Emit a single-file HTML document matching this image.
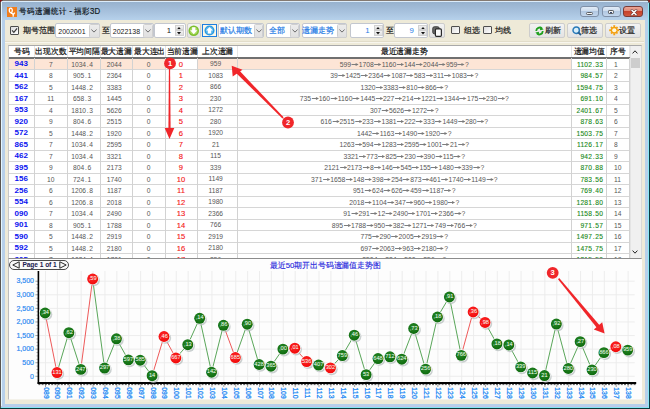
<!DOCTYPE html><html><head><meta charset="utf-8"><style>
*{margin:0;padding:0;box-sizing:border-box}
html,body{width:650px;height:409px;overflow:hidden;background:#5a5550}
body{position:relative;font-family:"Liberation Sans",sans-serif;}
.ab{position:absolute}
.t{position:absolute;white-space:nowrap;line-height:1}
.combo{position:absolute;background:#fff;border:1px solid #c3c7cf;border-radius:2px}
.dd{position:absolute;top:1px;bottom:1px;right:1px;background:linear-gradient(#f2f2f2,#dcdcdc);border:1px solid #d3d3d3;border-radius:1px}
.btn{position:absolute;background:linear-gradient(#f3f3f3,#e3e3e3);border:1px solid #cdcdcd;border-radius:2px}
.chk{position:absolute;background:linear-gradient(135deg,#dcdcdc,#fff);border:1px solid #4e4e4e;border-radius:1px}
.cell{position:absolute;white-space:nowrap;line-height:1;text-align:center}
.ar{display:inline-block;vertical-align:0px}
</style></head><body>

<div class="ab" style="left:1px;top:1px;width:648px;height:408px;background:#b7d0ea;border-radius:4px 4px 0 0;"></div>
<div class="ab" style="left:3px;top:0;width:644px;height:1.2px;background:#847a72"></div>
<div class="ab" style="left:2px;top:2.2px;width:646px;height:17.5px;background:linear-gradient(#97b2ce,#a6c0dc 50%,#b6d1eb)"></div>
<div class="ab" style="left:1px;top:1.2px;width:647px;height:1px;background:#dcecfa"></div>
<div class="ab" style="left:1px;top:1.2px;width:1px;height:406px;background:#e4f6ff"></div>
<div class="ab" style="left:1px;top:405.7px;width:648px;height:1.3px;background:#c4c6e8"></div>
<div class="ab" style="left:1px;top:407px;width:648px;height:1px;background:#86e6f4"></div>
<div class="ab" style="left:0px;top:408px;width:650px;height:1px;background:#0b3a3a"></div>
<div class="ab" style="left:647.6px;top:3px;width:0.8px;height:405px;background:#c6c8ea"></div>
<div class="ab" style="left:648.3px;top:3px;width:0.8px;height:405px;background:#8ae8f6"></div>
<div class="ab" style="left:649px;top:3px;width:1px;height:406px;background:#0d3c44"></div>
<div class="ab" style="left:0;top:0;width:2.4px;height:2.4px;background:#8a1414;border-radius:0 0 2.4px 0"></div>
<div class="ab" style="left:647.6px;top:0;width:2.4px;height:2.4px;background:#8a1414;border-radius:0 0 0 2.4px"></div>
<div class="ab" style="left:7px;top:7px;width:9.5px;height:10px;background:#f07d1c"></div>
<svg class="ab" style="left:7px;top:7px" width="10" height="10" viewBox="0 0 10 10"><ellipse cx="3.8" cy="3.4" rx="1.5" ry="2.2" stroke="#fff" stroke-width="1.3" fill="none"/><path d="M3.6 5.2 L4.6 6.6 M4.6 5.6 L6.2 7.6 L7.8 5.6 M6.2 7.6 V9.8" stroke="#fff" stroke-width="1.3" fill="none"/></svg>
<div class="t" style="left:19.2px;top:7.6px;font-size:7.8px;color:#141c26;-webkit-text-stroke:0.2px #141c26;transform:scaleY(1.08);transform-origin:0 50%">号码遗漏统计 - 福彩3D</div>
<div class="ab" style="left:580.2px;top:6.4px;width:19.3px;height:11px;background:linear-gradient(#e2ecf7 0%,#cddcee 45%,#b2c8e2 50%,#c3d6ec 100%);border:1px solid #7f90a8;border-radius:3px"></div>
<div class="ab" style="left:601.7px;top:6.4px;width:19.5px;height:11px;background:linear-gradient(#e2ecf7 0%,#cddcee 45%,#b2c8e2 50%,#c3d6ec 100%);border:1px solid #7f90a8;border-radius:3px"></div>
<div class="ab" style="left:623.4px;top:6.4px;width:20px;height:11px;background:linear-gradient(#eba595 0%,#e08a78 45%,#c7432c 50%,#d0583e 100%);border:1px solid #7a3a36;border-radius:3px"></div>
<div class="ab" style="left:586.2px;top:11.8px;width:7px;height:2.8px;background:#f6f6f6;border:0.9px solid #5a5d62;border-radius:1.4px"></div>
<div class="ab" style="left:607.6px;top:9.6px;width:6.8px;height:4.8px;background:#f2f2f2;border:1px solid #5a5d62;border-radius:1.2px"><div style="position:absolute;left:1.4px;top:1.2px;width:2px;height:0.9px;background:#3a4a70"></div></div>
<svg class="ab" style="left:629px;top:7.5px" width="10" height="9" viewBox="0 0 10 9"><path d="M2.9 2.3 L7.1 6.7 M7.1 2.3 L2.9 6.7" stroke="#6a3a3a" stroke-width="2.6" stroke-linecap="round"/><path d="M2.9 2.3 L7.1 6.7 M7.1 2.3 L2.9 6.7" stroke="#fff" stroke-width="1.4" stroke-linecap="round"/></svg>
<div class="ab" style="left:4.8px;top:19.5px;width:639.8px;height:384.2px;background:#eeead8"></div>
<div class="ab" style="left:5px;top:42.2px;width:639px;height:1px;background:#f8f6ee"></div>
<div class="ab" style="left:5px;top:41.4px;width:639px;height:0.8px;background:#e2ddca"></div>
<div class="chk" style="left:10px;top:26.3px;width:9px;height:8.6px"></div>
<svg class="ab" style="left:10px;top:26.3px" width="9" height="8.6" viewBox="0 0 9 9"><path d="M2 4.6 L3.8 6.6 L7.2 2.4" stroke="#3a3a3a" stroke-width="1.3" fill="none"/></svg>
<div class="t" style="left:23px;top:27.15px;font-size:7.7px;color:#1a1a1a;-webkit-text-stroke:0.2px #1a1a1a;">期号范围</div>
<div class="combo" style="left:55.4px;top:23.4px;width:45.1px;height:14.899999999999999px"></div>
<div class="ab" style="left:88.5px;top:24.0px;width:11.4px;height:13.7px;background:linear-gradient(#ececec,#e0e0e0);border:1px solid #cfcfcf;border-radius:1.5px"></div>
<svg class="ab" style="left:91.2px;top:29.4px" width="6" height="4" viewBox="0 0 6 4"><path d="M0.4 0.6 L3 3.1 L5.6 0.6" stroke="#4a4a4a" stroke-width="0.8" fill="none"/></svg>
<div class="t" style="left:58.3px;top:27.15px;font-size:7.7px;color:#1a1a1a;"></div>
<div class="t" style="left:58.3px;top:27.5px;font-size:7px;color:#1a1a1a;">2002001</div>
<div class="t" style="left:102px;top:27.15px;font-size:7.7px;color:#1a1a1a;-webkit-text-stroke:0.2px #1a1a1a;">至</div>
<div class="combo" style="left:110px;top:23.4px;width:44px;height:14.899999999999999px"></div>
<div class="ab" style="left:142.5px;top:24.0px;width:10.9px;height:13.7px;background:linear-gradient(#ececec,#e0e0e0);border:1px solid #cfcfcf;border-radius:1.5px"></div>
<svg class="ab" style="left:144.95px;top:29.4px" width="6" height="4" viewBox="0 0 6 4"><path d="M0.4 0.6 L3 3.1 L5.6 0.6" stroke="#4a4a4a" stroke-width="0.8" fill="none"/></svg>
<div class="t" style="left:113px;top:27.15px;font-size:7.7px;color:#1a1a1a;"></div>
<div class="t" style="left:112.8px;top:27.5px;font-size:7px;color:#1a1a1a;">2022138</div>
<div class="combo" style="left:153.8px;top:23.4px;width:32.0px;height:14.899999999999999px"></div>
<div class="t" style="left:166.8px;top:27.3px;font-size:7.8px;color:#1a1a1a;">1</div>
<div class="ab" style="left:174.6px;top:25px;width:9.6px;height:5.2px;background:linear-gradient(#f0f0f0,#e0e0e0);border:1px solid #d2d2d2"></div>
<div class="ab" style="left:174.6px;top:30.4px;width:9.6px;height:5.8px;background:linear-gradient(#f0f0f0,#e0e0e0);border:1px solid #d2d2d2"></div>
<svg class="ab" style="left:177.4px;top:26.6px" width="4" height="2.4" viewBox="0 0 4 2.4"><path d="M0 2.4 L2 0 L4 2.4z" fill="#111"/></svg>
<svg class="ab" style="left:177.4px;top:32.4px" width="4" height="2.4" viewBox="0 0 4 2.4"><path d="M0 0 L2 2.4 L4 0z" fill="#111"/></svg>
<div class="btn" style="left:186.5px;top:23px;width:14.3px;height:14.7px"></div>
<svg class="ab" style="left:188px;top:25px" width="11.5" height="11.5" viewBox="0 0 12 12"><circle cx="6" cy="6" r="5.5" fill="#7cbf2c"/><circle cx="6" cy="6" r="4" fill="#a8d85e"/><path d="M4.3 2.4 h3.4 v3.2 h2.1 L6 9.6 L2.2 5.6 h2.1 z" fill="#fff"/></svg>
<div class="ab" style="left:202px;top:23.8px;width:15px;height:13.5px;border:1.5px solid #1e7fe0;background:#fcf8e8"></div>
<svg class="ab" style="left:203.8px;top:25.3px" width="11" height="11" viewBox="0 0 12 12"><circle cx="6" cy="6" r="5.5" fill="#2b9ae0"/><circle cx="6" cy="6" r="4" fill="#5ab8ee"/><path d="M6 2.2 L9.8 6 h-2 v3.4 h-3.6 v-3.4 h-2 z" fill="#fff"/></svg>
<div class="combo" style="left:217.7px;top:23.4px;width:46.10000000000002px;height:14.899999999999999px"></div>
<div class="ab" style="left:253.8px;top:24.0px;width:9.4px;height:13.7px;background:linear-gradient(#ececec,#e0e0e0);border:1px solid #cfcfcf;border-radius:1.5px"></div>
<svg class="ab" style="left:255.5px;top:29.4px" width="6" height="4" viewBox="0 0 6 4"><path d="M0.4 0.6 L3 3.1 L5.6 0.6" stroke="#4a4a4a" stroke-width="0.8" fill="none"/></svg>
<div class="t" style="left:220.2px;top:27.15px;font-size:7.7px;color:#2a7ee6;-webkit-text-stroke:0.2px #2a7ee6;">默认期数</div>
<div class="combo" style="left:266px;top:23.4px;width:34px;height:14.899999999999999px"></div>
<div class="ab" style="left:290px;top:24.0px;width:9.4px;height:13.7px;background:linear-gradient(#ececec,#e0e0e0);border:1px solid #cfcfcf;border-radius:1.5px"></div>
<svg class="ab" style="left:291.7px;top:29.4px" width="6" height="4" viewBox="0 0 6 4"><path d="M0.4 0.6 L3 3.1 L5.6 0.6" stroke="#4a4a4a" stroke-width="0.8" fill="none"/></svg>
<div class="t" style="left:269px;top:27.15px;font-size:7.7px;color:#2a7ee6;-webkit-text-stroke:0.2px #2a7ee6;">全部</div>
<div class="combo" style="left:301.5px;top:23.4px;width:45.80000000000001px;height:14.899999999999999px"></div>
<div class="ab" style="left:337.3px;top:24.0px;width:9.4px;height:13.7px;background:linear-gradient(#ececec,#e0e0e0);border:1px solid #cfcfcf;border-radius:1.5px"></div>
<svg class="ab" style="left:339.0px;top:29.4px" width="6" height="4" viewBox="0 0 6 4"><path d="M0.4 0.6 L3 3.1 L5.6 0.6" stroke="#4a4a4a" stroke-width="0.8" fill="none"/></svg>
<div class="t" style="left:302.3px;top:27.15px;font-size:7.7px;color:#2a7ee6;-webkit-text-stroke:0.2px #2a7ee6;">遗漏走势</div>
<div class="combo" style="left:349.6px;top:23.4px;width:34.599999999999966px;height:14.899999999999999px"></div>
<div class="t" style="left:365.3px;top:27.3px;font-size:7.8px;color:#2a7ee6;">1</div>
<div class="ab" style="left:373.5px;top:25px;width:9.6px;height:5.2px;background:linear-gradient(#f0f0f0,#e0e0e0);border:1px solid #d2d2d2"></div>
<div class="ab" style="left:373.5px;top:30.4px;width:9.6px;height:5.8px;background:linear-gradient(#f0f0f0,#e0e0e0);border:1px solid #d2d2d2"></div>
<svg class="ab" style="left:376.3px;top:26.6px" width="4" height="2.4" viewBox="0 0 4 2.4"><path d="M0 2.4 L2 0 L4 2.4z" fill="#111"/></svg>
<svg class="ab" style="left:376.3px;top:32.4px" width="4" height="2.4" viewBox="0 0 4 2.4"><path d="M0 0 L2 2.4 L4 0z" fill="#111"/></svg>
<div class="t" style="left:385.8px;top:27.15px;font-size:7.7px;color:#1a1a1a;-webkit-text-stroke:0.2px #1a1a1a;">至</div>
<div class="combo" style="left:393.5px;top:23.4px;width:34.19999999999999px;height:14.899999999999999px"></div>
<div class="t" style="left:409.5px;top:27.3px;font-size:7.8px;color:#2a7ee6;">9</div>
<div class="ab" style="left:417.7px;top:25px;width:9.6px;height:5.2px;background:linear-gradient(#f0f0f0,#e0e0e0);border:1px solid #d2d2d2"></div>
<div class="ab" style="left:417.7px;top:30.4px;width:9.6px;height:5.8px;background:linear-gradient(#f0f0f0,#e0e0e0);border:1px solid #d2d2d2"></div>
<svg class="ab" style="left:420.5px;top:26.6px" width="4" height="2.4" viewBox="0 0 4 2.4"><path d="M0 2.4 L2 0 L4 2.4z" fill="#111"/></svg>
<svg class="ab" style="left:420.5px;top:32.4px" width="4" height="2.4" viewBox="0 0 4 2.4"><path d="M0 0 L2 2.4 L4 0z" fill="#111"/></svg>
<div class="btn" style="left:429px;top:23.4px;width:15.6px;height:14.6px"></div>
<svg class="ab" style="left:431.5px;top:25.5px" width="11" height="11" viewBox="0 0 11 11"><rect x="0.8" y="0.8" width="6.4" height="7" rx="1.5" fill="#6a6a6a" stroke="#3a3a3a" stroke-width="1"/><rect x="3.4" y="2.9" width="6" height="7.4" rx="1" fill="#fafafa" stroke="#2a2a2a" stroke-width="1.2"/></svg>
<div class="chk" style="left:451.2px;top:26.4px;width:8.8px;height:8px"></div>
<div class="t" style="left:463.8px;top:27.15px;font-size:7.7px;color:#1a1a1a;-webkit-text-stroke:0.2px #1a1a1a;">组选</div>
<div class="chk" style="left:483px;top:26.4px;width:8.5px;height:8px"></div>
<div class="t" style="left:495.4px;top:27.15px;font-size:7.7px;color:#1a1a1a;-webkit-text-stroke:0.2px #1a1a1a;">均线</div>
<div class="btn" style="left:528.5px;top:23.4px;width:36.1px;height:14.9px"></div>
<svg class="ab" style="left:535px;top:25.8px" width="9" height="10" viewBox="0 0 9 10"><path d="M1.3 5 A3.3 3.3 0 0 1 7 2.6" stroke="#1ea01e" stroke-width="1.8" fill="none"/><path d="M7.7 5 A3.3 3.3 0 0 1 2 7.4" stroke="#1ea01e" stroke-width="1.8" fill="none"/><path d="M5.4 0.6 L8.6 3.6 L5 4.2z" fill="#1ea01e"/><path d="M3.6 9.4 L0.4 6.4 L4 5.8z" fill="#1ea01e"/></svg>
<div class="t" style="left:545.4px;top:27.15px;font-size:7.7px;color:#1a1a1a;-webkit-text-stroke:0.2px #1a1a1a;">刷新</div>
<div class="btn" style="left:566.6px;top:23.4px;width:36px;height:14.9px"></div>
<svg class="ab" style="left:572px;top:25.8px" width="10" height="10" viewBox="0 0 10 10"><circle cx="4.2" cy="4.2" r="3.2" fill="#d8eefa" stroke="#2a7ab8" stroke-width="1.5"/><path d="M6.3 6.3 L9 9" stroke="#2a5a88" stroke-width="1.8"/></svg>
<div class="t" style="left:580.5px;top:27.15px;font-size:7.7px;color:#1a1a1a;-webkit-text-stroke:0.2px #1a1a1a;">筛选</div>
<div class="btn" style="left:604.6px;top:23.4px;width:36.2px;height:14.9px"></div>
<svg class="ab" style="left:608.6px;top:25.2px" width="10.5" height="10.5" viewBox="0 0 10 10"><g fill="#f4a010"><circle cx="5" cy="5" r="3.4"/><path d="M4 0.2 h2 l-0.3 2 h-1.4z M4 9.8 h2 l-0.3 -2 h-1.4z M0.2 4 v2 l2 -0.3 v-1.4z M9.8 4 v2 l-2 -0.3 v-1.4z M1.2 2.6 L2.6 1.2 L3.6 3 L3 3.6z M8.8 7.4 L7.4 8.8 L6.4 7 L7 6.4z M7.4 1.2 L8.8 2.6 L7 3.6 L6.4 3z M2.6 8.8 L1.2 7.4 L3 6.4 L3.6 7z"/></g><circle cx="5" cy="5" r="2" fill="#fff8dc"/></svg>
<div class="t" style="left:619px;top:27.15px;font-size:7.7px;color:#1a1a1a;-webkit-text-stroke:0.2px #1a1a1a;">设置</div>
<div class="ab" style="left:8.0px;top:44.5px;width:634.0px;height:214.5px;background:#fff;border:1px solid #a9a9a9;border-right-color:#d8d8d8;border-left-color:#c8c8c8;border-bottom:1.6px solid #8c8c8c;overflow:hidden">
<div class="ab" style="left:-0.2px;top:12.9px;width:25.400000000000002px;height:11.5px;background:#fde5d6"></div>
<div class="ab" style="left:25.2px;top:12.9px;width:33.5px;height:11.5px;background:#fde5d6"></div>
<div class="ab" style="left:58.7px;top:12.9px;width:32.3px;height:11.5px;background:#fde5d6"></div>
<div class="ab" style="left:91.0px;top:12.9px;width:32.5px;height:11.5px;background:#fde5d6"></div>
<div class="ab" style="left:123.5px;top:12.9px;width:33.099999999999994px;height:11.5px;background:#fde5d6"></div>
<div class="ab" style="left:188.9px;top:12.9px;width:39.29999999999998px;height:11.5px;background:#fde5d6"></div>
<div class="ab" style="left:228.2px;top:12.9px;width:334.50000000000006px;height:11.5px;background:#fde5d6"></div>
<div class="ab" style="left:0;top:11.7px;width:620.6px;height:1.6px;background:#707070"></div>
<div class="ab" style="left:24.7px;top:0px;width:1px;height:11.5px;background:#e6e6e6"></div>
<div class="ab" style="left:58.2px;top:0px;width:1px;height:11.5px;background:#e6e6e6"></div>
<div class="ab" style="left:90.5px;top:0px;width:1px;height:11.5px;background:#e6e6e6"></div>
<div class="ab" style="left:123.0px;top:0px;width:1px;height:11.5px;background:#e6e6e6"></div>
<div class="ab" style="left:156.1px;top:0px;width:1px;height:11.5px;background:#e6e6e6"></div>
<div class="ab" style="left:188.4px;top:0px;width:1px;height:11.5px;background:#e6e6e6"></div>
<div class="ab" style="left:227.7px;top:0px;width:1px;height:11.5px;background:#e6e6e6"></div>
<div class="ab" style="left:562.2px;top:0px;width:1px;height:11.5px;background:#e6e6e6"></div>
<div class="ab" style="left:596.5px;top:0px;width:1px;height:11.5px;background:#e6e6e6"></div>
<div class="ab" style="left:620.1px;top:0px;width:1px;height:11.5px;background:#e6e6e6"></div>
<div class="ab" style="left:0;top:23.5px;width:620.6px;height:0.9px;background:#d6d6d6"></div>
<div class="ab" style="left:0;top:35.0px;width:620.6px;height:0.9px;background:#d6d6d6"></div>
<div class="ab" style="left:0;top:46.5px;width:620.6px;height:0.9px;background:#d6d6d6"></div>
<div class="ab" style="left:0;top:58.0px;width:620.6px;height:0.9px;background:#d6d6d6"></div>
<div class="ab" style="left:0;top:69.5px;width:620.6px;height:0.9px;background:#d6d6d6"></div>
<div class="ab" style="left:0;top:81.0px;width:620.6px;height:0.9px;background:#d6d6d6"></div>
<div class="ab" style="left:0;top:92.5px;width:620.6px;height:0.9px;background:#d6d6d6"></div>
<div class="ab" style="left:0;top:104.0px;width:620.6px;height:0.9px;background:#d6d6d6"></div>
<div class="ab" style="left:0;top:115.5px;width:620.6px;height:0.9px;background:#d6d6d6"></div>
<div class="ab" style="left:0;top:127.0px;width:620.6px;height:0.9px;background:#d6d6d6"></div>
<div class="ab" style="left:0;top:138.5px;width:620.6px;height:0.9px;background:#d6d6d6"></div>
<div class="ab" style="left:0;top:150.0px;width:620.6px;height:0.9px;background:#d6d6d6"></div>
<div class="ab" style="left:0;top:161.5px;width:620.6px;height:0.9px;background:#d6d6d6"></div>
<div class="ab" style="left:0;top:173.0px;width:620.6px;height:0.9px;background:#d6d6d6"></div>
<div class="ab" style="left:0;top:184.5px;width:620.6px;height:0.9px;background:#d6d6d6"></div>
<div class="ab" style="left:0;top:196.0px;width:620.6px;height:0.9px;background:#d6d6d6"></div>
<div class="ab" style="left:0;top:207.5px;width:620.6px;height:0.9px;background:#d6d6d6"></div>
<div class="ab" style="left:0;top:219.0px;width:620.6px;height:0.9px;background:#d6d6d6"></div>
<div class="ab" style="left:24.7px;top:12.9px;width:1px;height:220px;background:#d2d2d2"></div>
<div class="ab" style="left:58.2px;top:12.9px;width:1px;height:220px;background:#d2d2d2"></div>
<div class="ab" style="left:90.5px;top:12.9px;width:1px;height:220px;background:#d2d2d2"></div>
<div class="ab" style="left:123.0px;top:12.9px;width:1px;height:220px;background:#d2d2d2"></div>
<div class="ab" style="left:156.1px;top:12.9px;width:1px;height:220px;background:#d2d2d2"></div>
<div class="ab" style="left:188.4px;top:12.9px;width:1px;height:220px;background:#d2d2d2"></div>
<div class="ab" style="left:227.7px;top:12.9px;width:1px;height:220px;background:#d2d2d2"></div>
<div class="ab" style="left:562.2px;top:12.9px;width:1px;height:220px;background:#d2d2d2"></div>
<div class="ab" style="left:596.5px;top:12.9px;width:1px;height:220px;background:#d2d2d2"></div>
<div class="ab" style="left:620.1px;top:12.9px;width:1px;height:220px;background:#d2d2d2"></div>
<div class="cell" style="left:-0.2px;width:25.400000000000002px;top:2.3px;font-size:8px;color:#101010;-webkit-text-stroke:0.2px #101010;transform:scaleX(0.97)">号码</div>
<div class="cell" style="left:25.2px;width:33.5px;top:2.3px;font-size:8px;color:#101010;-webkit-text-stroke:0.2px #101010;transform:scaleX(0.97)">出现次数</div>
<div class="cell" style="left:58.7px;width:32.3px;top:2.3px;font-size:8px;color:#101010;-webkit-text-stroke:0.2px #101010;transform:scaleX(0.97)">平均间隔</div>
<div class="cell" style="left:91.0px;width:32.5px;top:2.3px;font-size:8px;color:#101010;-webkit-text-stroke:0.2px #101010;transform:scaleX(0.97)">最大遗漏</div>
<div class="cell" style="left:123.5px;width:33.099999999999994px;top:2.3px;font-size:8px;color:#101010;-webkit-text-stroke:0.2px #101010;transform:scaleX(0.97)">最大连出</div>
<div class="cell" style="left:156.6px;width:32.30000000000001px;top:2.3px;font-size:8px;color:#101010;-webkit-text-stroke:0.2px #101010;transform:scaleX(0.97)">当前遗漏</div>
<div class="cell" style="left:188.9px;width:39.29999999999998px;top:2.3px;font-size:8px;color:#101010;-webkit-text-stroke:0.2px #101010;transform:scaleX(0.97)">上次遗漏</div>
<div class="cell" style="left:228.2px;width:334.50000000000006px;top:2.3px;font-size:8px;color:#101010;-webkit-text-stroke:0.2px #101010;transform:scaleX(0.97)">最近遗漏走势</div>
<div class="cell" style="left:562.7px;width:34.299999999999955px;top:2.3px;font-size:8px;color:#101010;-webkit-text-stroke:0.2px #101010;transform:scaleX(0.97)">遗漏均值</div>
<div class="cell" style="left:597.0px;width:23.600000000000023px;top:2.3px;font-size:8px;color:#101010;-webkit-text-stroke:0.2px #101010;transform:scaleX(0.97)">序号</div>
<div class="cell" style="left:-0.50px;width:25.400000000000002px;top:14.85px;font-weight:bold;color:#0a14f0;font-size:8px;">943</div>
<div class="cell" style="left:24.70px;width:33.5px;top:15.18px;color:#565656;font-size:7.4px;transform:scaleX(0.9);">7</div>
<div class="cell" style="left:56.70px;width:32.3px;top:15.18px;color:#565656;font-size:7.4px;transform:scaleX(0.9);">1034<span style="display:inline-block;width:3.6px;text-align:center">.</span>4</div>
<div class="cell" style="left:89.00px;width:32.5px;top:15.18px;color:#565656;font-size:7.4px;transform:scaleX(0.9);">2044</div>
<div class="cell" style="left:123.00px;width:33.099999999999994px;top:15.18px;color:#565656;font-size:7.4px;transform:scaleX(0.9);">0</div>
<div class="cell" style="left:155.80px;width:32.30000000000001px;top:15.07px;color:#f41414;font-size:7.6px;-webkit-text-stroke:0.12px #f41414;">0</div>
<div class="cell" style="left:187.40px;width:39.29999999999998px;top:14.78px;color:#565656;font-size:7.4px;transform:scaleX(0.9);">959</div>
<div class="cell" style="left:228.20px;width:334.50000000000006px;top:15.29px;color:#565656;font-size:7.2px;transform:scaleX(0.945);">599<svg class="ar" width="8.2" height="5" viewBox="0 0 8.2 5"><path d="M0.4 2.5 H5.4" stroke="#7a7a7a" stroke-width="1"/><path d="M4.8 0.9 L8.1 2.5 L4.8 4.1z" fill="#7a7a7a"/></svg>1708<svg class="ar" width="8.2" height="5" viewBox="0 0 8.2 5"><path d="M0.4 2.5 H5.4" stroke="#7a7a7a" stroke-width="1"/><path d="M4.8 0.9 L8.1 2.5 L4.8 4.1z" fill="#7a7a7a"/></svg>1160<svg class="ar" width="8.2" height="5" viewBox="0 0 8.2 5"><path d="M0.4 2.5 H5.4" stroke="#7a7a7a" stroke-width="1"/><path d="M4.8 0.9 L8.1 2.5 L4.8 4.1z" fill="#7a7a7a"/></svg>144<svg class="ar" width="8.2" height="5" viewBox="0 0 8.2 5"><path d="M0.4 2.5 H5.4" stroke="#7a7a7a" stroke-width="1"/><path d="M4.8 0.9 L8.1 2.5 L4.8 4.1z" fill="#7a7a7a"/></svg>2044<svg class="ar" width="8.2" height="5" viewBox="0 0 8.2 5"><path d="M0.4 2.5 H5.4" stroke="#7a7a7a" stroke-width="1"/><path d="M4.8 0.9 L8.1 2.5 L4.8 4.1z" fill="#7a7a7a"/></svg>959<svg class="ar" width="8.2" height="5" viewBox="0 0 8.2 5"><path d="M0.4 2.5 H5.4" stroke="#7a7a7a" stroke-width="1"/><path d="M4.8 0.9 L8.1 2.5 L4.8 4.1z" fill="#7a7a7a"/></svg>?</div>
<div class="cell" style="left:562.7px;width:31.299999999999955px;top:15.18px;color:#188818;-webkit-text-stroke:0.12px #188818;font-size:7.4px;text-align:right;letter-spacing:0.3px;transform:scaleX(0.9);transform-origin:100% 50%;">1102<span style="display:inline-block;width:3.4px;text-align:center">.</span>33</div>
<div class="cell" style="left:604.90px;width:20px;text-align:left;transform-origin:0 50%;top:15.18px;color:#565656;font-size:7.4px;transform:scaleX(0.9);">1</div>
<div class="cell" style="left:-0.50px;width:25.400000000000002px;top:26.35px;font-weight:bold;color:#0a14f0;font-size:8px;">441</div>
<div class="cell" style="left:24.70px;width:33.5px;top:26.68px;color:#565656;font-size:7.4px;transform:scaleX(0.9);">8</div>
<div class="cell" style="left:56.70px;width:32.3px;top:26.68px;color:#565656;font-size:7.4px;transform:scaleX(0.9);">905<span style="display:inline-block;width:3.6px;text-align:center">.</span>1</div>
<div class="cell" style="left:89.00px;width:32.5px;top:26.68px;color:#565656;font-size:7.4px;transform:scaleX(0.9);">2364</div>
<div class="cell" style="left:123.00px;width:33.099999999999994px;top:26.68px;color:#565656;font-size:7.4px;transform:scaleX(0.9);">0</div>
<div class="cell" style="left:155.80px;width:32.30000000000001px;top:26.57px;color:#f41414;font-size:7.6px;-webkit-text-stroke:0.12px #f41414;">1</div>
<div class="cell" style="left:187.40px;width:39.29999999999998px;top:26.28px;color:#565656;font-size:7.4px;transform:scaleX(0.9);">1083</div>
<div class="cell" style="left:228.20px;width:334.50000000000006px;top:26.79px;color:#565656;font-size:7.2px;transform:scaleX(0.945);">39<svg class="ar" width="8.2" height="5" viewBox="0 0 8.2 5"><path d="M0.4 2.5 H5.4" stroke="#7a7a7a" stroke-width="1"/><path d="M4.8 0.9 L8.1 2.5 L4.8 4.1z" fill="#7a7a7a"/></svg>1425<svg class="ar" width="8.2" height="5" viewBox="0 0 8.2 5"><path d="M0.4 2.5 H5.4" stroke="#7a7a7a" stroke-width="1"/><path d="M4.8 0.9 L8.1 2.5 L4.8 4.1z" fill="#7a7a7a"/></svg>2364<svg class="ar" width="8.2" height="5" viewBox="0 0 8.2 5"><path d="M0.4 2.5 H5.4" stroke="#7a7a7a" stroke-width="1"/><path d="M4.8 0.9 L8.1 2.5 L4.8 4.1z" fill="#7a7a7a"/></svg>1087<svg class="ar" width="8.2" height="5" viewBox="0 0 8.2 5"><path d="M0.4 2.5 H5.4" stroke="#7a7a7a" stroke-width="1"/><path d="M4.8 0.9 L8.1 2.5 L4.8 4.1z" fill="#7a7a7a"/></svg>583<svg class="ar" width="8.2" height="5" viewBox="0 0 8.2 5"><path d="M0.4 2.5 H5.4" stroke="#7a7a7a" stroke-width="1"/><path d="M4.8 0.9 L8.1 2.5 L4.8 4.1z" fill="#7a7a7a"/></svg>311<svg class="ar" width="8.2" height="5" viewBox="0 0 8.2 5"><path d="M0.4 2.5 H5.4" stroke="#7a7a7a" stroke-width="1"/><path d="M4.8 0.9 L8.1 2.5 L4.8 4.1z" fill="#7a7a7a"/></svg>1083<svg class="ar" width="8.2" height="5" viewBox="0 0 8.2 5"><path d="M0.4 2.5 H5.4" stroke="#7a7a7a" stroke-width="1"/><path d="M4.8 0.9 L8.1 2.5 L4.8 4.1z" fill="#7a7a7a"/></svg>?</div>
<div class="cell" style="left:562.7px;width:31.299999999999955px;top:26.68px;color:#188818;-webkit-text-stroke:0.12px #188818;font-size:7.4px;text-align:right;letter-spacing:0.3px;transform:scaleX(0.9);transform-origin:100% 50%;">984<span style="display:inline-block;width:3.4px;text-align:center">.</span>57</div>
<div class="cell" style="left:604.90px;width:20px;text-align:left;transform-origin:0 50%;top:26.68px;color:#565656;font-size:7.4px;transform:scaleX(0.9);">2</div>
<div class="cell" style="left:-0.50px;width:25.400000000000002px;top:37.85px;font-weight:bold;color:#0a14f0;font-size:8px;">562</div>
<div class="cell" style="left:24.70px;width:33.5px;top:38.18px;color:#565656;font-size:7.4px;transform:scaleX(0.9);">5</div>
<div class="cell" style="left:56.70px;width:32.3px;top:38.18px;color:#565656;font-size:7.4px;transform:scaleX(0.9);">1448<span style="display:inline-block;width:3.6px;text-align:center">.</span>2</div>
<div class="cell" style="left:89.00px;width:32.5px;top:38.18px;color:#565656;font-size:7.4px;transform:scaleX(0.9);">3383</div>
<div class="cell" style="left:123.00px;width:33.099999999999994px;top:38.18px;color:#565656;font-size:7.4px;transform:scaleX(0.9);">0</div>
<div class="cell" style="left:155.80px;width:32.30000000000001px;top:38.07px;color:#f41414;font-size:7.6px;-webkit-text-stroke:0.12px #f41414;">2</div>
<div class="cell" style="left:187.40px;width:39.29999999999998px;top:37.78px;color:#565656;font-size:7.4px;transform:scaleX(0.9);">866</div>
<div class="cell" style="left:228.20px;width:334.50000000000006px;top:38.29px;color:#565656;font-size:7.2px;transform:scaleX(0.945);">1320<svg class="ar" width="8.2" height="5" viewBox="0 0 8.2 5"><path d="M0.4 2.5 H5.4" stroke="#7a7a7a" stroke-width="1"/><path d="M4.8 0.9 L8.1 2.5 L4.8 4.1z" fill="#7a7a7a"/></svg>3383<svg class="ar" width="8.2" height="5" viewBox="0 0 8.2 5"><path d="M0.4 2.5 H5.4" stroke="#7a7a7a" stroke-width="1"/><path d="M4.8 0.9 L8.1 2.5 L4.8 4.1z" fill="#7a7a7a"/></svg>810<svg class="ar" width="8.2" height="5" viewBox="0 0 8.2 5"><path d="M0.4 2.5 H5.4" stroke="#7a7a7a" stroke-width="1"/><path d="M4.8 0.9 L8.1 2.5 L4.8 4.1z" fill="#7a7a7a"/></svg>866<svg class="ar" width="8.2" height="5" viewBox="0 0 8.2 5"><path d="M0.4 2.5 H5.4" stroke="#7a7a7a" stroke-width="1"/><path d="M4.8 0.9 L8.1 2.5 L4.8 4.1z" fill="#7a7a7a"/></svg>?</div>
<div class="cell" style="left:562.7px;width:31.299999999999955px;top:38.18px;color:#188818;-webkit-text-stroke:0.12px #188818;font-size:7.4px;text-align:right;letter-spacing:0.3px;transform:scaleX(0.9);transform-origin:100% 50%;">1594<span style="display:inline-block;width:3.4px;text-align:center">.</span>75</div>
<div class="cell" style="left:604.90px;width:20px;text-align:left;transform-origin:0 50%;top:38.18px;color:#565656;font-size:7.4px;transform:scaleX(0.9);">3</div>
<div class="cell" style="left:-0.50px;width:25.400000000000002px;top:49.35px;font-weight:bold;color:#0a14f0;font-size:8px;">167</div>
<div class="cell" style="left:24.70px;width:33.5px;top:49.68px;color:#565656;font-size:7.4px;transform:scaleX(0.9);">11</div>
<div class="cell" style="left:56.70px;width:32.3px;top:49.68px;color:#565656;font-size:7.4px;transform:scaleX(0.9);">658<span style="display:inline-block;width:3.6px;text-align:center">.</span>3</div>
<div class="cell" style="left:89.00px;width:32.5px;top:49.68px;color:#565656;font-size:7.4px;transform:scaleX(0.9);">1445</div>
<div class="cell" style="left:123.00px;width:33.099999999999994px;top:49.68px;color:#565656;font-size:7.4px;transform:scaleX(0.9);">0</div>
<div class="cell" style="left:155.80px;width:32.30000000000001px;top:49.57px;color:#f41414;font-size:7.6px;-webkit-text-stroke:0.12px #f41414;">3</div>
<div class="cell" style="left:187.40px;width:39.29999999999998px;top:49.28px;color:#565656;font-size:7.4px;transform:scaleX(0.9);">230</div>
<div class="cell" style="left:228.20px;width:334.50000000000006px;top:49.79px;color:#565656;font-size:7.2px;transform:scaleX(0.945);">735<svg class="ar" width="8.2" height="5" viewBox="0 0 8.2 5"><path d="M0.4 2.5 H5.4" stroke="#7a7a7a" stroke-width="1"/><path d="M4.8 0.9 L8.1 2.5 L4.8 4.1z" fill="#7a7a7a"/></svg>160<svg class="ar" width="8.2" height="5" viewBox="0 0 8.2 5"><path d="M0.4 2.5 H5.4" stroke="#7a7a7a" stroke-width="1"/><path d="M4.8 0.9 L8.1 2.5 L4.8 4.1z" fill="#7a7a7a"/></svg>1160<svg class="ar" width="8.2" height="5" viewBox="0 0 8.2 5"><path d="M0.4 2.5 H5.4" stroke="#7a7a7a" stroke-width="1"/><path d="M4.8 0.9 L8.1 2.5 L4.8 4.1z" fill="#7a7a7a"/></svg>1445<svg class="ar" width="8.2" height="5" viewBox="0 0 8.2 5"><path d="M0.4 2.5 H5.4" stroke="#7a7a7a" stroke-width="1"/><path d="M4.8 0.9 L8.1 2.5 L4.8 4.1z" fill="#7a7a7a"/></svg>227<svg class="ar" width="8.2" height="5" viewBox="0 0 8.2 5"><path d="M0.4 2.5 H5.4" stroke="#7a7a7a" stroke-width="1"/><path d="M4.8 0.9 L8.1 2.5 L4.8 4.1z" fill="#7a7a7a"/></svg>214<svg class="ar" width="8.2" height="5" viewBox="0 0 8.2 5"><path d="M0.4 2.5 H5.4" stroke="#7a7a7a" stroke-width="1"/><path d="M4.8 0.9 L8.1 2.5 L4.8 4.1z" fill="#7a7a7a"/></svg>1221<svg class="ar" width="8.2" height="5" viewBox="0 0 8.2 5"><path d="M0.4 2.5 H5.4" stroke="#7a7a7a" stroke-width="1"/><path d="M4.8 0.9 L8.1 2.5 L4.8 4.1z" fill="#7a7a7a"/></svg>1344<svg class="ar" width="8.2" height="5" viewBox="0 0 8.2 5"><path d="M0.4 2.5 H5.4" stroke="#7a7a7a" stroke-width="1"/><path d="M4.8 0.9 L8.1 2.5 L4.8 4.1z" fill="#7a7a7a"/></svg>175<svg class="ar" width="8.2" height="5" viewBox="0 0 8.2 5"><path d="M0.4 2.5 H5.4" stroke="#7a7a7a" stroke-width="1"/><path d="M4.8 0.9 L8.1 2.5 L4.8 4.1z" fill="#7a7a7a"/></svg>230<svg class="ar" width="8.2" height="5" viewBox="0 0 8.2 5"><path d="M0.4 2.5 H5.4" stroke="#7a7a7a" stroke-width="1"/><path d="M4.8 0.9 L8.1 2.5 L4.8 4.1z" fill="#7a7a7a"/></svg>?</div>
<div class="cell" style="left:562.7px;width:31.299999999999955px;top:49.68px;color:#188818;-webkit-text-stroke:0.12px #188818;font-size:7.4px;text-align:right;letter-spacing:0.3px;transform:scaleX(0.9);transform-origin:100% 50%;">691<span style="display:inline-block;width:3.4px;text-align:center">.</span>10</div>
<div class="cell" style="left:604.90px;width:20px;text-align:left;transform-origin:0 50%;top:49.68px;color:#565656;font-size:7.4px;transform:scaleX(0.9);">4</div>
<div class="cell" style="left:-0.50px;width:25.400000000000002px;top:60.85px;font-weight:bold;color:#0a14f0;font-size:8px;">953</div>
<div class="cell" style="left:24.70px;width:33.5px;top:61.18px;color:#565656;font-size:7.4px;transform:scaleX(0.9);">4</div>
<div class="cell" style="left:56.70px;width:32.3px;top:61.18px;color:#565656;font-size:7.4px;transform:scaleX(0.9);">1810<span style="display:inline-block;width:3.6px;text-align:center">.</span>3</div>
<div class="cell" style="left:89.00px;width:32.5px;top:61.18px;color:#565656;font-size:7.4px;transform:scaleX(0.9);">5626</div>
<div class="cell" style="left:123.00px;width:33.099999999999994px;top:61.18px;color:#565656;font-size:7.4px;transform:scaleX(0.9);">0</div>
<div class="cell" style="left:155.80px;width:32.30000000000001px;top:61.07px;color:#f41414;font-size:7.6px;-webkit-text-stroke:0.12px #f41414;">4</div>
<div class="cell" style="left:187.40px;width:39.29999999999998px;top:60.78px;color:#565656;font-size:7.4px;transform:scaleX(0.9);">1272</div>
<div class="cell" style="left:228.20px;width:334.50000000000006px;top:61.29px;color:#565656;font-size:7.2px;transform:scaleX(0.945);">307<svg class="ar" width="8.2" height="5" viewBox="0 0 8.2 5"><path d="M0.4 2.5 H5.4" stroke="#7a7a7a" stroke-width="1"/><path d="M4.8 0.9 L8.1 2.5 L4.8 4.1z" fill="#7a7a7a"/></svg>5626<svg class="ar" width="8.2" height="5" viewBox="0 0 8.2 5"><path d="M0.4 2.5 H5.4" stroke="#7a7a7a" stroke-width="1"/><path d="M4.8 0.9 L8.1 2.5 L4.8 4.1z" fill="#7a7a7a"/></svg>1272<svg class="ar" width="8.2" height="5" viewBox="0 0 8.2 5"><path d="M0.4 2.5 H5.4" stroke="#7a7a7a" stroke-width="1"/><path d="M4.8 0.9 L8.1 2.5 L4.8 4.1z" fill="#7a7a7a"/></svg>?</div>
<div class="cell" style="left:562.7px;width:31.299999999999955px;top:61.18px;color:#188818;-webkit-text-stroke:0.12px #188818;font-size:7.4px;text-align:right;letter-spacing:0.3px;transform:scaleX(0.9);transform-origin:100% 50%;">2401<span style="display:inline-block;width:3.4px;text-align:center">.</span>67</div>
<div class="cell" style="left:604.90px;width:20px;text-align:left;transform-origin:0 50%;top:61.18px;color:#565656;font-size:7.4px;transform:scaleX(0.9);">5</div>
<div class="cell" style="left:-0.50px;width:25.400000000000002px;top:72.35px;font-weight:bold;color:#0a14f0;font-size:8px;">920</div>
<div class="cell" style="left:24.70px;width:33.5px;top:72.68px;color:#565656;font-size:7.4px;transform:scaleX(0.9);">9</div>
<div class="cell" style="left:56.70px;width:32.3px;top:72.68px;color:#565656;font-size:7.4px;transform:scaleX(0.9);">804<span style="display:inline-block;width:3.6px;text-align:center">.</span>6</div>
<div class="cell" style="left:89.00px;width:32.5px;top:72.68px;color:#565656;font-size:7.4px;transform:scaleX(0.9);">2515</div>
<div class="cell" style="left:123.00px;width:33.099999999999994px;top:72.68px;color:#565656;font-size:7.4px;transform:scaleX(0.9);">0</div>
<div class="cell" style="left:155.80px;width:32.30000000000001px;top:72.57px;color:#f41414;font-size:7.6px;-webkit-text-stroke:0.12px #f41414;">5</div>
<div class="cell" style="left:187.40px;width:39.29999999999998px;top:72.28px;color:#565656;font-size:7.4px;transform:scaleX(0.9);">280</div>
<div class="cell" style="left:228.20px;width:334.50000000000006px;top:72.79px;color:#565656;font-size:7.2px;transform:scaleX(0.945);">616<svg class="ar" width="8.2" height="5" viewBox="0 0 8.2 5"><path d="M0.4 2.5 H5.4" stroke="#7a7a7a" stroke-width="1"/><path d="M4.8 0.9 L8.1 2.5 L4.8 4.1z" fill="#7a7a7a"/></svg>2515<svg class="ar" width="8.2" height="5" viewBox="0 0 8.2 5"><path d="M0.4 2.5 H5.4" stroke="#7a7a7a" stroke-width="1"/><path d="M4.8 0.9 L8.1 2.5 L4.8 4.1z" fill="#7a7a7a"/></svg>233<svg class="ar" width="8.2" height="5" viewBox="0 0 8.2 5"><path d="M0.4 2.5 H5.4" stroke="#7a7a7a" stroke-width="1"/><path d="M4.8 0.9 L8.1 2.5 L4.8 4.1z" fill="#7a7a7a"/></svg>1381<svg class="ar" width="8.2" height="5" viewBox="0 0 8.2 5"><path d="M0.4 2.5 H5.4" stroke="#7a7a7a" stroke-width="1"/><path d="M4.8 0.9 L8.1 2.5 L4.8 4.1z" fill="#7a7a7a"/></svg>222<svg class="ar" width="8.2" height="5" viewBox="0 0 8.2 5"><path d="M0.4 2.5 H5.4" stroke="#7a7a7a" stroke-width="1"/><path d="M4.8 0.9 L8.1 2.5 L4.8 4.1z" fill="#7a7a7a"/></svg>333<svg class="ar" width="8.2" height="5" viewBox="0 0 8.2 5"><path d="M0.4 2.5 H5.4" stroke="#7a7a7a" stroke-width="1"/><path d="M4.8 0.9 L8.1 2.5 L4.8 4.1z" fill="#7a7a7a"/></svg>1449<svg class="ar" width="8.2" height="5" viewBox="0 0 8.2 5"><path d="M0.4 2.5 H5.4" stroke="#7a7a7a" stroke-width="1"/><path d="M4.8 0.9 L8.1 2.5 L4.8 4.1z" fill="#7a7a7a"/></svg>280<svg class="ar" width="8.2" height="5" viewBox="0 0 8.2 5"><path d="M0.4 2.5 H5.4" stroke="#7a7a7a" stroke-width="1"/><path d="M4.8 0.9 L8.1 2.5 L4.8 4.1z" fill="#7a7a7a"/></svg>?</div>
<div class="cell" style="left:562.7px;width:31.299999999999955px;top:72.68px;color:#188818;-webkit-text-stroke:0.12px #188818;font-size:7.4px;text-align:right;letter-spacing:0.3px;transform:scaleX(0.9);transform-origin:100% 50%;">878<span style="display:inline-block;width:3.4px;text-align:center">.</span>63</div>
<div class="cell" style="left:604.90px;width:20px;text-align:left;transform-origin:0 50%;top:72.68px;color:#565656;font-size:7.4px;transform:scaleX(0.9);">6</div>
<div class="cell" style="left:-0.50px;width:25.400000000000002px;top:83.85px;font-weight:bold;color:#0a14f0;font-size:8px;">572</div>
<div class="cell" style="left:24.70px;width:33.5px;top:84.18px;color:#565656;font-size:7.4px;transform:scaleX(0.9);">5</div>
<div class="cell" style="left:56.70px;width:32.3px;top:84.18px;color:#565656;font-size:7.4px;transform:scaleX(0.9);">1448<span style="display:inline-block;width:3.6px;text-align:center">.</span>2</div>
<div class="cell" style="left:89.00px;width:32.5px;top:84.18px;color:#565656;font-size:7.4px;transform:scaleX(0.9);">1920</div>
<div class="cell" style="left:123.00px;width:33.099999999999994px;top:84.18px;color:#565656;font-size:7.4px;transform:scaleX(0.9);">0</div>
<div class="cell" style="left:155.80px;width:32.30000000000001px;top:84.07px;color:#f41414;font-size:7.6px;-webkit-text-stroke:0.12px #f41414;">6</div>
<div class="cell" style="left:187.40px;width:39.29999999999998px;top:83.78px;color:#565656;font-size:7.4px;transform:scaleX(0.9);">1920</div>
<div class="cell" style="left:228.20px;width:334.50000000000006px;top:84.29px;color:#565656;font-size:7.2px;transform:scaleX(0.945);">1442<svg class="ar" width="8.2" height="5" viewBox="0 0 8.2 5"><path d="M0.4 2.5 H5.4" stroke="#7a7a7a" stroke-width="1"/><path d="M4.8 0.9 L8.1 2.5 L4.8 4.1z" fill="#7a7a7a"/></svg>1163<svg class="ar" width="8.2" height="5" viewBox="0 0 8.2 5"><path d="M0.4 2.5 H5.4" stroke="#7a7a7a" stroke-width="1"/><path d="M4.8 0.9 L8.1 2.5 L4.8 4.1z" fill="#7a7a7a"/></svg>1490<svg class="ar" width="8.2" height="5" viewBox="0 0 8.2 5"><path d="M0.4 2.5 H5.4" stroke="#7a7a7a" stroke-width="1"/><path d="M4.8 0.9 L8.1 2.5 L4.8 4.1z" fill="#7a7a7a"/></svg>1920<svg class="ar" width="8.2" height="5" viewBox="0 0 8.2 5"><path d="M0.4 2.5 H5.4" stroke="#7a7a7a" stroke-width="1"/><path d="M4.8 0.9 L8.1 2.5 L4.8 4.1z" fill="#7a7a7a"/></svg>?</div>
<div class="cell" style="left:562.7px;width:31.299999999999955px;top:84.18px;color:#188818;-webkit-text-stroke:0.12px #188818;font-size:7.4px;text-align:right;letter-spacing:0.3px;transform:scaleX(0.9);transform-origin:100% 50%;">1503<span style="display:inline-block;width:3.4px;text-align:center">.</span>75</div>
<div class="cell" style="left:604.90px;width:20px;text-align:left;transform-origin:0 50%;top:84.18px;color:#565656;font-size:7.4px;transform:scaleX(0.9);">7</div>
<div class="cell" style="left:-0.50px;width:25.400000000000002px;top:95.35px;font-weight:bold;color:#0a14f0;font-size:8px;">865</div>
<div class="cell" style="left:24.70px;width:33.5px;top:95.68px;color:#565656;font-size:7.4px;transform:scaleX(0.9);">7</div>
<div class="cell" style="left:56.70px;width:32.3px;top:95.68px;color:#565656;font-size:7.4px;transform:scaleX(0.9);">1034<span style="display:inline-block;width:3.6px;text-align:center">.</span>4</div>
<div class="cell" style="left:89.00px;width:32.5px;top:95.68px;color:#565656;font-size:7.4px;transform:scaleX(0.9);">2595</div>
<div class="cell" style="left:123.00px;width:33.099999999999994px;top:95.68px;color:#565656;font-size:7.4px;transform:scaleX(0.9);">0</div>
<div class="cell" style="left:155.80px;width:32.30000000000001px;top:95.57px;color:#f41414;font-size:7.6px;-webkit-text-stroke:0.12px #f41414;">7</div>
<div class="cell" style="left:187.40px;width:39.29999999999998px;top:95.28px;color:#565656;font-size:7.4px;transform:scaleX(0.9);">21</div>
<div class="cell" style="left:228.20px;width:334.50000000000006px;top:95.79px;color:#565656;font-size:7.2px;transform:scaleX(0.945);">1263<svg class="ar" width="8.2" height="5" viewBox="0 0 8.2 5"><path d="M0.4 2.5 H5.4" stroke="#7a7a7a" stroke-width="1"/><path d="M4.8 0.9 L8.1 2.5 L4.8 4.1z" fill="#7a7a7a"/></svg>594<svg class="ar" width="8.2" height="5" viewBox="0 0 8.2 5"><path d="M0.4 2.5 H5.4" stroke="#7a7a7a" stroke-width="1"/><path d="M4.8 0.9 L8.1 2.5 L4.8 4.1z" fill="#7a7a7a"/></svg>1283<svg class="ar" width="8.2" height="5" viewBox="0 0 8.2 5"><path d="M0.4 2.5 H5.4" stroke="#7a7a7a" stroke-width="1"/><path d="M4.8 0.9 L8.1 2.5 L4.8 4.1z" fill="#7a7a7a"/></svg>2595<svg class="ar" width="8.2" height="5" viewBox="0 0 8.2 5"><path d="M0.4 2.5 H5.4" stroke="#7a7a7a" stroke-width="1"/><path d="M4.8 0.9 L8.1 2.5 L4.8 4.1z" fill="#7a7a7a"/></svg>1001<svg class="ar" width="8.2" height="5" viewBox="0 0 8.2 5"><path d="M0.4 2.5 H5.4" stroke="#7a7a7a" stroke-width="1"/><path d="M4.8 0.9 L8.1 2.5 L4.8 4.1z" fill="#7a7a7a"/></svg>21<svg class="ar" width="8.2" height="5" viewBox="0 0 8.2 5"><path d="M0.4 2.5 H5.4" stroke="#7a7a7a" stroke-width="1"/><path d="M4.8 0.9 L8.1 2.5 L4.8 4.1z" fill="#7a7a7a"/></svg>?</div>
<div class="cell" style="left:562.7px;width:31.299999999999955px;top:95.68px;color:#188818;-webkit-text-stroke:0.12px #188818;font-size:7.4px;text-align:right;letter-spacing:0.3px;transform:scaleX(0.9);transform-origin:100% 50%;">1126<span style="display:inline-block;width:3.4px;text-align:center">.</span>17</div>
<div class="cell" style="left:604.90px;width:20px;text-align:left;transform-origin:0 50%;top:95.68px;color:#565656;font-size:7.4px;transform:scaleX(0.9);">8</div>
<div class="cell" style="left:-0.50px;width:25.400000000000002px;top:106.85px;font-weight:bold;color:#0a14f0;font-size:8px;">462</div>
<div class="cell" style="left:24.70px;width:33.5px;top:107.18px;color:#565656;font-size:7.4px;transform:scaleX(0.9);">7</div>
<div class="cell" style="left:56.70px;width:32.3px;top:107.18px;color:#565656;font-size:7.4px;transform:scaleX(0.9);">1034<span style="display:inline-block;width:3.6px;text-align:center">.</span>4</div>
<div class="cell" style="left:89.00px;width:32.5px;top:107.18px;color:#565656;font-size:7.4px;transform:scaleX(0.9);">3321</div>
<div class="cell" style="left:123.00px;width:33.099999999999994px;top:107.18px;color:#565656;font-size:7.4px;transform:scaleX(0.9);">0</div>
<div class="cell" style="left:155.80px;width:32.30000000000001px;top:107.07px;color:#f41414;font-size:7.6px;-webkit-text-stroke:0.12px #f41414;">8</div>
<div class="cell" style="left:187.40px;width:39.29999999999998px;top:106.78px;color:#565656;font-size:7.4px;transform:scaleX(0.9);">115</div>
<div class="cell" style="left:228.20px;width:334.50000000000006px;top:107.29px;color:#565656;font-size:7.2px;transform:scaleX(0.945);">3321<svg class="ar" width="8.2" height="5" viewBox="0 0 8.2 5"><path d="M0.4 2.5 H5.4" stroke="#7a7a7a" stroke-width="1"/><path d="M4.8 0.9 L8.1 2.5 L4.8 4.1z" fill="#7a7a7a"/></svg>773<svg class="ar" width="8.2" height="5" viewBox="0 0 8.2 5"><path d="M0.4 2.5 H5.4" stroke="#7a7a7a" stroke-width="1"/><path d="M4.8 0.9 L8.1 2.5 L4.8 4.1z" fill="#7a7a7a"/></svg>825<svg class="ar" width="8.2" height="5" viewBox="0 0 8.2 5"><path d="M0.4 2.5 H5.4" stroke="#7a7a7a" stroke-width="1"/><path d="M4.8 0.9 L8.1 2.5 L4.8 4.1z" fill="#7a7a7a"/></svg>230<svg class="ar" width="8.2" height="5" viewBox="0 0 8.2 5"><path d="M0.4 2.5 H5.4" stroke="#7a7a7a" stroke-width="1"/><path d="M4.8 0.9 L8.1 2.5 L4.8 4.1z" fill="#7a7a7a"/></svg>390<svg class="ar" width="8.2" height="5" viewBox="0 0 8.2 5"><path d="M0.4 2.5 H5.4" stroke="#7a7a7a" stroke-width="1"/><path d="M4.8 0.9 L8.1 2.5 L4.8 4.1z" fill="#7a7a7a"/></svg>115<svg class="ar" width="8.2" height="5" viewBox="0 0 8.2 5"><path d="M0.4 2.5 H5.4" stroke="#7a7a7a" stroke-width="1"/><path d="M4.8 0.9 L8.1 2.5 L4.8 4.1z" fill="#7a7a7a"/></svg>?</div>
<div class="cell" style="left:562.7px;width:31.299999999999955px;top:107.18px;color:#188818;-webkit-text-stroke:0.12px #188818;font-size:7.4px;text-align:right;letter-spacing:0.3px;transform:scaleX(0.9);transform-origin:100% 50%;">942<span style="display:inline-block;width:3.4px;text-align:center">.</span>33</div>
<div class="cell" style="left:604.90px;width:20px;text-align:left;transform-origin:0 50%;top:107.18px;color:#565656;font-size:7.4px;transform:scaleX(0.9);">9</div>
<div class="cell" style="left:-0.50px;width:25.400000000000002px;top:118.35px;font-weight:bold;color:#0a14f0;font-size:8px;">395</div>
<div class="cell" style="left:24.70px;width:33.5px;top:118.68px;color:#565656;font-size:7.4px;transform:scaleX(0.9);">9</div>
<div class="cell" style="left:56.70px;width:32.3px;top:118.68px;color:#565656;font-size:7.4px;transform:scaleX(0.9);">804<span style="display:inline-block;width:3.6px;text-align:center">.</span>6</div>
<div class="cell" style="left:89.00px;width:32.5px;top:118.68px;color:#565656;font-size:7.4px;transform:scaleX(0.9);">2173</div>
<div class="cell" style="left:123.00px;width:33.099999999999994px;top:118.68px;color:#565656;font-size:7.4px;transform:scaleX(0.9);">0</div>
<div class="cell" style="left:155.80px;width:32.30000000000001px;top:118.57px;color:#f41414;font-size:7.6px;-webkit-text-stroke:0.12px #f41414;">9</div>
<div class="cell" style="left:187.40px;width:39.29999999999998px;top:118.28px;color:#565656;font-size:7.4px;transform:scaleX(0.9);">339</div>
<div class="cell" style="left:228.20px;width:334.50000000000006px;top:118.79px;color:#565656;font-size:7.2px;transform:scaleX(0.945);">2121<svg class="ar" width="8.2" height="5" viewBox="0 0 8.2 5"><path d="M0.4 2.5 H5.4" stroke="#7a7a7a" stroke-width="1"/><path d="M4.8 0.9 L8.1 2.5 L4.8 4.1z" fill="#7a7a7a"/></svg>2173<svg class="ar" width="8.2" height="5" viewBox="0 0 8.2 5"><path d="M0.4 2.5 H5.4" stroke="#7a7a7a" stroke-width="1"/><path d="M4.8 0.9 L8.1 2.5 L4.8 4.1z" fill="#7a7a7a"/></svg>8<svg class="ar" width="8.2" height="5" viewBox="0 0 8.2 5"><path d="M0.4 2.5 H5.4" stroke="#7a7a7a" stroke-width="1"/><path d="M4.8 0.9 L8.1 2.5 L4.8 4.1z" fill="#7a7a7a"/></svg>146<svg class="ar" width="8.2" height="5" viewBox="0 0 8.2 5"><path d="M0.4 2.5 H5.4" stroke="#7a7a7a" stroke-width="1"/><path d="M4.8 0.9 L8.1 2.5 L4.8 4.1z" fill="#7a7a7a"/></svg>545<svg class="ar" width="8.2" height="5" viewBox="0 0 8.2 5"><path d="M0.4 2.5 H5.4" stroke="#7a7a7a" stroke-width="1"/><path d="M4.8 0.9 L8.1 2.5 L4.8 4.1z" fill="#7a7a7a"/></svg>155<svg class="ar" width="8.2" height="5" viewBox="0 0 8.2 5"><path d="M0.4 2.5 H5.4" stroke="#7a7a7a" stroke-width="1"/><path d="M4.8 0.9 L8.1 2.5 L4.8 4.1z" fill="#7a7a7a"/></svg>1480<svg class="ar" width="8.2" height="5" viewBox="0 0 8.2 5"><path d="M0.4 2.5 H5.4" stroke="#7a7a7a" stroke-width="1"/><path d="M4.8 0.9 L8.1 2.5 L4.8 4.1z" fill="#7a7a7a"/></svg>339<svg class="ar" width="8.2" height="5" viewBox="0 0 8.2 5"><path d="M0.4 2.5 H5.4" stroke="#7a7a7a" stroke-width="1"/><path d="M4.8 0.9 L8.1 2.5 L4.8 4.1z" fill="#7a7a7a"/></svg>?</div>
<div class="cell" style="left:562.7px;width:31.299999999999955px;top:118.68px;color:#188818;-webkit-text-stroke:0.12px #188818;font-size:7.4px;text-align:right;letter-spacing:0.3px;transform:scaleX(0.9);transform-origin:100% 50%;">870<span style="display:inline-block;width:3.4px;text-align:center">.</span>88</div>
<div class="cell" style="left:604.90px;width:20px;text-align:left;transform-origin:0 50%;top:118.68px;color:#565656;font-size:7.4px;transform:scaleX(0.9);">10</div>
<div class="cell" style="left:-0.50px;width:25.400000000000002px;top:129.85px;font-weight:bold;color:#0a14f0;font-size:8px;">156</div>
<div class="cell" style="left:24.70px;width:33.5px;top:130.18px;color:#565656;font-size:7.4px;transform:scaleX(0.9);">10</div>
<div class="cell" style="left:56.70px;width:32.3px;top:130.18px;color:#565656;font-size:7.4px;transform:scaleX(0.9);">724<span style="display:inline-block;width:3.6px;text-align:center">.</span>1</div>
<div class="cell" style="left:89.00px;width:32.5px;top:130.18px;color:#565656;font-size:7.4px;transform:scaleX(0.9);">1740</div>
<div class="cell" style="left:123.00px;width:33.099999999999994px;top:130.18px;color:#565656;font-size:7.4px;transform:scaleX(0.9);">0</div>
<div class="cell" style="left:155.80px;width:32.30000000000001px;top:130.07px;color:#f41414;font-size:7.6px;-webkit-text-stroke:0.12px #f41414;">10</div>
<div class="cell" style="left:187.40px;width:39.29999999999998px;top:129.78px;color:#565656;font-size:7.4px;transform:scaleX(0.9);">1149</div>
<div class="cell" style="left:228.20px;width:334.50000000000006px;top:130.29px;color:#565656;font-size:7.2px;transform:scaleX(0.945);">371<svg class="ar" width="8.2" height="5" viewBox="0 0 8.2 5"><path d="M0.4 2.5 H5.4" stroke="#7a7a7a" stroke-width="1"/><path d="M4.8 0.9 L8.1 2.5 L4.8 4.1z" fill="#7a7a7a"/></svg>1658<svg class="ar" width="8.2" height="5" viewBox="0 0 8.2 5"><path d="M0.4 2.5 H5.4" stroke="#7a7a7a" stroke-width="1"/><path d="M4.8 0.9 L8.1 2.5 L4.8 4.1z" fill="#7a7a7a"/></svg>148<svg class="ar" width="8.2" height="5" viewBox="0 0 8.2 5"><path d="M0.4 2.5 H5.4" stroke="#7a7a7a" stroke-width="1"/><path d="M4.8 0.9 L8.1 2.5 L4.8 4.1z" fill="#7a7a7a"/></svg>398<svg class="ar" width="8.2" height="5" viewBox="0 0 8.2 5"><path d="M0.4 2.5 H5.4" stroke="#7a7a7a" stroke-width="1"/><path d="M4.8 0.9 L8.1 2.5 L4.8 4.1z" fill="#7a7a7a"/></svg>254<svg class="ar" width="8.2" height="5" viewBox="0 0 8.2 5"><path d="M0.4 2.5 H5.4" stroke="#7a7a7a" stroke-width="1"/><path d="M4.8 0.9 L8.1 2.5 L4.8 4.1z" fill="#7a7a7a"/></svg>873<svg class="ar" width="8.2" height="5" viewBox="0 0 8.2 5"><path d="M0.4 2.5 H5.4" stroke="#7a7a7a" stroke-width="1"/><path d="M4.8 0.9 L8.1 2.5 L4.8 4.1z" fill="#7a7a7a"/></svg>461<svg class="ar" width="8.2" height="5" viewBox="0 0 8.2 5"><path d="M0.4 2.5 H5.4" stroke="#7a7a7a" stroke-width="1"/><path d="M4.8 0.9 L8.1 2.5 L4.8 4.1z" fill="#7a7a7a"/></svg>1740<svg class="ar" width="8.2" height="5" viewBox="0 0 8.2 5"><path d="M0.4 2.5 H5.4" stroke="#7a7a7a" stroke-width="1"/><path d="M4.8 0.9 L8.1 2.5 L4.8 4.1z" fill="#7a7a7a"/></svg>1149<svg class="ar" width="8.2" height="5" viewBox="0 0 8.2 5"><path d="M0.4 2.5 H5.4" stroke="#7a7a7a" stroke-width="1"/><path d="M4.8 0.9 L8.1 2.5 L4.8 4.1z" fill="#7a7a7a"/></svg>?</div>
<div class="cell" style="left:562.7px;width:31.299999999999955px;top:130.18px;color:#188818;-webkit-text-stroke:0.12px #188818;font-size:7.4px;text-align:right;letter-spacing:0.3px;transform:scaleX(0.9);transform-origin:100% 50%;">783<span style="display:inline-block;width:3.4px;text-align:center">.</span>56</div>
<div class="cell" style="left:604.90px;width:20px;text-align:left;transform-origin:0 50%;top:130.18px;color:#565656;font-size:7.4px;transform:scaleX(0.9);">11</div>
<div class="cell" style="left:-0.50px;width:25.400000000000002px;top:141.35px;font-weight:bold;color:#0a14f0;font-size:8px;">256</div>
<div class="cell" style="left:24.70px;width:33.5px;top:141.68px;color:#565656;font-size:7.4px;transform:scaleX(0.9);">6</div>
<div class="cell" style="left:56.70px;width:32.3px;top:141.68px;color:#565656;font-size:7.4px;transform:scaleX(0.9);">1206<span style="display:inline-block;width:3.6px;text-align:center">.</span>8</div>
<div class="cell" style="left:89.00px;width:32.5px;top:141.68px;color:#565656;font-size:7.4px;transform:scaleX(0.9);">1187</div>
<div class="cell" style="left:123.00px;width:33.099999999999994px;top:141.68px;color:#565656;font-size:7.4px;transform:scaleX(0.9);">0</div>
<div class="cell" style="left:155.80px;width:32.30000000000001px;top:141.57px;color:#f41414;font-size:7.6px;-webkit-text-stroke:0.12px #f41414;">11</div>
<div class="cell" style="left:187.40px;width:39.29999999999998px;top:141.28px;color:#565656;font-size:7.4px;transform:scaleX(0.9);">1187</div>
<div class="cell" style="left:228.20px;width:334.50000000000006px;top:141.79px;color:#565656;font-size:7.2px;transform:scaleX(0.945);">951<svg class="ar" width="8.2" height="5" viewBox="0 0 8.2 5"><path d="M0.4 2.5 H5.4" stroke="#7a7a7a" stroke-width="1"/><path d="M4.8 0.9 L8.1 2.5 L4.8 4.1z" fill="#7a7a7a"/></svg>624<svg class="ar" width="8.2" height="5" viewBox="0 0 8.2 5"><path d="M0.4 2.5 H5.4" stroke="#7a7a7a" stroke-width="1"/><path d="M4.8 0.9 L8.1 2.5 L4.8 4.1z" fill="#7a7a7a"/></svg>626<svg class="ar" width="8.2" height="5" viewBox="0 0 8.2 5"><path d="M0.4 2.5 H5.4" stroke="#7a7a7a" stroke-width="1"/><path d="M4.8 0.9 L8.1 2.5 L4.8 4.1z" fill="#7a7a7a"/></svg>459<svg class="ar" width="8.2" height="5" viewBox="0 0 8.2 5"><path d="M0.4 2.5 H5.4" stroke="#7a7a7a" stroke-width="1"/><path d="M4.8 0.9 L8.1 2.5 L4.8 4.1z" fill="#7a7a7a"/></svg>1187<svg class="ar" width="8.2" height="5" viewBox="0 0 8.2 5"><path d="M0.4 2.5 H5.4" stroke="#7a7a7a" stroke-width="1"/><path d="M4.8 0.9 L8.1 2.5 L4.8 4.1z" fill="#7a7a7a"/></svg>?</div>
<div class="cell" style="left:562.7px;width:31.299999999999955px;top:141.68px;color:#188818;-webkit-text-stroke:0.12px #188818;font-size:7.4px;text-align:right;letter-spacing:0.3px;transform:scaleX(0.9);transform-origin:100% 50%;">769<span style="display:inline-block;width:3.4px;text-align:center">.</span>40</div>
<div class="cell" style="left:604.90px;width:20px;text-align:left;transform-origin:0 50%;top:141.68px;color:#565656;font-size:7.4px;transform:scaleX(0.9);">12</div>
<div class="cell" style="left:-0.50px;width:25.400000000000002px;top:152.85px;font-weight:bold;color:#0a14f0;font-size:8px;">554</div>
<div class="cell" style="left:24.70px;width:33.5px;top:153.18px;color:#565656;font-size:7.4px;transform:scaleX(0.9);">6</div>
<div class="cell" style="left:56.70px;width:32.3px;top:153.18px;color:#565656;font-size:7.4px;transform:scaleX(0.9);">1206<span style="display:inline-block;width:3.6px;text-align:center">.</span>8</div>
<div class="cell" style="left:89.00px;width:32.5px;top:153.18px;color:#565656;font-size:7.4px;transform:scaleX(0.9);">2018</div>
<div class="cell" style="left:123.00px;width:33.099999999999994px;top:153.18px;color:#565656;font-size:7.4px;transform:scaleX(0.9);">0</div>
<div class="cell" style="left:155.80px;width:32.30000000000001px;top:153.07px;color:#f41414;font-size:7.6px;-webkit-text-stroke:0.12px #f41414;">12</div>
<div class="cell" style="left:187.40px;width:39.29999999999998px;top:152.78px;color:#565656;font-size:7.4px;transform:scaleX(0.9);">1980</div>
<div class="cell" style="left:228.20px;width:334.50000000000006px;top:153.29px;color:#565656;font-size:7.2px;transform:scaleX(0.945);">2018<svg class="ar" width="8.2" height="5" viewBox="0 0 8.2 5"><path d="M0.4 2.5 H5.4" stroke="#7a7a7a" stroke-width="1"/><path d="M4.8 0.9 L8.1 2.5 L4.8 4.1z" fill="#7a7a7a"/></svg>1104<svg class="ar" width="8.2" height="5" viewBox="0 0 8.2 5"><path d="M0.4 2.5 H5.4" stroke="#7a7a7a" stroke-width="1"/><path d="M4.8 0.9 L8.1 2.5 L4.8 4.1z" fill="#7a7a7a"/></svg>347<svg class="ar" width="8.2" height="5" viewBox="0 0 8.2 5"><path d="M0.4 2.5 H5.4" stroke="#7a7a7a" stroke-width="1"/><path d="M4.8 0.9 L8.1 2.5 L4.8 4.1z" fill="#7a7a7a"/></svg>960<svg class="ar" width="8.2" height="5" viewBox="0 0 8.2 5"><path d="M0.4 2.5 H5.4" stroke="#7a7a7a" stroke-width="1"/><path d="M4.8 0.9 L8.1 2.5 L4.8 4.1z" fill="#7a7a7a"/></svg>1980<svg class="ar" width="8.2" height="5" viewBox="0 0 8.2 5"><path d="M0.4 2.5 H5.4" stroke="#7a7a7a" stroke-width="1"/><path d="M4.8 0.9 L8.1 2.5 L4.8 4.1z" fill="#7a7a7a"/></svg>?</div>
<div class="cell" style="left:562.7px;width:31.299999999999955px;top:153.18px;color:#188818;-webkit-text-stroke:0.12px #188818;font-size:7.4px;text-align:right;letter-spacing:0.3px;transform:scaleX(0.9);transform-origin:100% 50%;">1281<span style="display:inline-block;width:3.4px;text-align:center">.</span>80</div>
<div class="cell" style="left:604.90px;width:20px;text-align:left;transform-origin:0 50%;top:153.18px;color:#565656;font-size:7.4px;transform:scaleX(0.9);">13</div>
<div class="cell" style="left:-0.50px;width:25.400000000000002px;top:164.35px;font-weight:bold;color:#0a14f0;font-size:8px;">090</div>
<div class="cell" style="left:24.70px;width:33.5px;top:164.68px;color:#565656;font-size:7.4px;transform:scaleX(0.9);">7</div>
<div class="cell" style="left:56.70px;width:32.3px;top:164.68px;color:#565656;font-size:7.4px;transform:scaleX(0.9);">1034<span style="display:inline-block;width:3.6px;text-align:center">.</span>4</div>
<div class="cell" style="left:89.00px;width:32.5px;top:164.68px;color:#565656;font-size:7.4px;transform:scaleX(0.9);">2490</div>
<div class="cell" style="left:123.00px;width:33.099999999999994px;top:164.68px;color:#565656;font-size:7.4px;transform:scaleX(0.9);">0</div>
<div class="cell" style="left:155.80px;width:32.30000000000001px;top:164.57px;color:#f41414;font-size:7.6px;-webkit-text-stroke:0.12px #f41414;">13</div>
<div class="cell" style="left:187.40px;width:39.29999999999998px;top:164.28px;color:#565656;font-size:7.4px;transform:scaleX(0.9);">2366</div>
<div class="cell" style="left:228.20px;width:334.50000000000006px;top:164.79px;color:#565656;font-size:7.2px;transform:scaleX(0.945);">91<svg class="ar" width="8.2" height="5" viewBox="0 0 8.2 5"><path d="M0.4 2.5 H5.4" stroke="#7a7a7a" stroke-width="1"/><path d="M4.8 0.9 L8.1 2.5 L4.8 4.1z" fill="#7a7a7a"/></svg>291<svg class="ar" width="8.2" height="5" viewBox="0 0 8.2 5"><path d="M0.4 2.5 H5.4" stroke="#7a7a7a" stroke-width="1"/><path d="M4.8 0.9 L8.1 2.5 L4.8 4.1z" fill="#7a7a7a"/></svg>12<svg class="ar" width="8.2" height="5" viewBox="0 0 8.2 5"><path d="M0.4 2.5 H5.4" stroke="#7a7a7a" stroke-width="1"/><path d="M4.8 0.9 L8.1 2.5 L4.8 4.1z" fill="#7a7a7a"/></svg>2490<svg class="ar" width="8.2" height="5" viewBox="0 0 8.2 5"><path d="M0.4 2.5 H5.4" stroke="#7a7a7a" stroke-width="1"/><path d="M4.8 0.9 L8.1 2.5 L4.8 4.1z" fill="#7a7a7a"/></svg>1701<svg class="ar" width="8.2" height="5" viewBox="0 0 8.2 5"><path d="M0.4 2.5 H5.4" stroke="#7a7a7a" stroke-width="1"/><path d="M4.8 0.9 L8.1 2.5 L4.8 4.1z" fill="#7a7a7a"/></svg>2366<svg class="ar" width="8.2" height="5" viewBox="0 0 8.2 5"><path d="M0.4 2.5 H5.4" stroke="#7a7a7a" stroke-width="1"/><path d="M4.8 0.9 L8.1 2.5 L4.8 4.1z" fill="#7a7a7a"/></svg>?</div>
<div class="cell" style="left:562.7px;width:31.299999999999955px;top:164.68px;color:#188818;-webkit-text-stroke:0.12px #188818;font-size:7.4px;text-align:right;letter-spacing:0.3px;transform:scaleX(0.9);transform-origin:100% 50%;">1158<span style="display:inline-block;width:3.4px;text-align:center">.</span>50</div>
<div class="cell" style="left:604.90px;width:20px;text-align:left;transform-origin:0 50%;top:164.68px;color:#565656;font-size:7.4px;transform:scaleX(0.9);">14</div>
<div class="cell" style="left:-0.50px;width:25.400000000000002px;top:175.85px;font-weight:bold;color:#0a14f0;font-size:8px;">901</div>
<div class="cell" style="left:24.70px;width:33.5px;top:176.18px;color:#565656;font-size:7.4px;transform:scaleX(0.9);">8</div>
<div class="cell" style="left:56.70px;width:32.3px;top:176.18px;color:#565656;font-size:7.4px;transform:scaleX(0.9);">905<span style="display:inline-block;width:3.6px;text-align:center">.</span>1</div>
<div class="cell" style="left:89.00px;width:32.5px;top:176.18px;color:#565656;font-size:7.4px;transform:scaleX(0.9);">1788</div>
<div class="cell" style="left:123.00px;width:33.099999999999994px;top:176.18px;color:#565656;font-size:7.4px;transform:scaleX(0.9);">0</div>
<div class="cell" style="left:155.80px;width:32.30000000000001px;top:176.07px;color:#f41414;font-size:7.6px;-webkit-text-stroke:0.12px #f41414;">14</div>
<div class="cell" style="left:187.40px;width:39.29999999999998px;top:175.78px;color:#565656;font-size:7.4px;transform:scaleX(0.9);">766</div>
<div class="cell" style="left:228.20px;width:334.50000000000006px;top:176.29px;color:#565656;font-size:7.2px;transform:scaleX(0.945);">895<svg class="ar" width="8.2" height="5" viewBox="0 0 8.2 5"><path d="M0.4 2.5 H5.4" stroke="#7a7a7a" stroke-width="1"/><path d="M4.8 0.9 L8.1 2.5 L4.8 4.1z" fill="#7a7a7a"/></svg>1788<svg class="ar" width="8.2" height="5" viewBox="0 0 8.2 5"><path d="M0.4 2.5 H5.4" stroke="#7a7a7a" stroke-width="1"/><path d="M4.8 0.9 L8.1 2.5 L4.8 4.1z" fill="#7a7a7a"/></svg>950<svg class="ar" width="8.2" height="5" viewBox="0 0 8.2 5"><path d="M0.4 2.5 H5.4" stroke="#7a7a7a" stroke-width="1"/><path d="M4.8 0.9 L8.1 2.5 L4.8 4.1z" fill="#7a7a7a"/></svg>382<svg class="ar" width="8.2" height="5" viewBox="0 0 8.2 5"><path d="M0.4 2.5 H5.4" stroke="#7a7a7a" stroke-width="1"/><path d="M4.8 0.9 L8.1 2.5 L4.8 4.1z" fill="#7a7a7a"/></svg>1271<svg class="ar" width="8.2" height="5" viewBox="0 0 8.2 5"><path d="M0.4 2.5 H5.4" stroke="#7a7a7a" stroke-width="1"/><path d="M4.8 0.9 L8.1 2.5 L4.8 4.1z" fill="#7a7a7a"/></svg>749<svg class="ar" width="8.2" height="5" viewBox="0 0 8.2 5"><path d="M0.4 2.5 H5.4" stroke="#7a7a7a" stroke-width="1"/><path d="M4.8 0.9 L8.1 2.5 L4.8 4.1z" fill="#7a7a7a"/></svg>766<svg class="ar" width="8.2" height="5" viewBox="0 0 8.2 5"><path d="M0.4 2.5 H5.4" stroke="#7a7a7a" stroke-width="1"/><path d="M4.8 0.9 L8.1 2.5 L4.8 4.1z" fill="#7a7a7a"/></svg>?</div>
<div class="cell" style="left:562.7px;width:31.299999999999955px;top:176.18px;color:#188818;-webkit-text-stroke:0.12px #188818;font-size:7.4px;text-align:right;letter-spacing:0.3px;transform:scaleX(0.9);transform-origin:100% 50%;">971<span style="display:inline-block;width:3.4px;text-align:center">.</span>57</div>
<div class="cell" style="left:604.90px;width:20px;text-align:left;transform-origin:0 50%;top:176.18px;color:#565656;font-size:7.4px;transform:scaleX(0.9);">15</div>
<div class="cell" style="left:-0.50px;width:25.400000000000002px;top:187.35px;font-weight:bold;color:#0a14f0;font-size:8px;">590</div>
<div class="cell" style="left:24.70px;width:33.5px;top:187.68px;color:#565656;font-size:7.4px;transform:scaleX(0.9);">5</div>
<div class="cell" style="left:56.70px;width:32.3px;top:187.68px;color:#565656;font-size:7.4px;transform:scaleX(0.9);">1448<span style="display:inline-block;width:3.6px;text-align:center">.</span>2</div>
<div class="cell" style="left:89.00px;width:32.5px;top:187.68px;color:#565656;font-size:7.4px;transform:scaleX(0.9);">2919</div>
<div class="cell" style="left:123.00px;width:33.099999999999994px;top:187.68px;color:#565656;font-size:7.4px;transform:scaleX(0.9);">0</div>
<div class="cell" style="left:155.80px;width:32.30000000000001px;top:187.57px;color:#f41414;font-size:7.6px;-webkit-text-stroke:0.12px #f41414;">15</div>
<div class="cell" style="left:187.40px;width:39.29999999999998px;top:187.28px;color:#565656;font-size:7.4px;transform:scaleX(0.9);">2919</div>
<div class="cell" style="left:228.20px;width:334.50000000000006px;top:187.79px;color:#565656;font-size:7.2px;transform:scaleX(0.945);">775<svg class="ar" width="8.2" height="5" viewBox="0 0 8.2 5"><path d="M0.4 2.5 H5.4" stroke="#7a7a7a" stroke-width="1"/><path d="M4.8 0.9 L8.1 2.5 L4.8 4.1z" fill="#7a7a7a"/></svg>290<svg class="ar" width="8.2" height="5" viewBox="0 0 8.2 5"><path d="M0.4 2.5 H5.4" stroke="#7a7a7a" stroke-width="1"/><path d="M4.8 0.9 L8.1 2.5 L4.8 4.1z" fill="#7a7a7a"/></svg>2005<svg class="ar" width="8.2" height="5" viewBox="0 0 8.2 5"><path d="M0.4 2.5 H5.4" stroke="#7a7a7a" stroke-width="1"/><path d="M4.8 0.9 L8.1 2.5 L4.8 4.1z" fill="#7a7a7a"/></svg>2919<svg class="ar" width="8.2" height="5" viewBox="0 0 8.2 5"><path d="M0.4 2.5 H5.4" stroke="#7a7a7a" stroke-width="1"/><path d="M4.8 0.9 L8.1 2.5 L4.8 4.1z" fill="#7a7a7a"/></svg>?</div>
<div class="cell" style="left:562.7px;width:31.299999999999955px;top:187.68px;color:#188818;-webkit-text-stroke:0.12px #188818;font-size:7.4px;text-align:right;letter-spacing:0.3px;transform:scaleX(0.9);transform-origin:100% 50%;">1497<span style="display:inline-block;width:3.4px;text-align:center">.</span>25</div>
<div class="cell" style="left:604.90px;width:20px;text-align:left;transform-origin:0 50%;top:187.68px;color:#565656;font-size:7.4px;transform:scaleX(0.9);">16</div>
<div class="cell" style="left:-0.50px;width:25.400000000000002px;top:198.85px;font-weight:bold;color:#0a14f0;font-size:8px;">592</div>
<div class="cell" style="left:24.70px;width:33.5px;top:199.18px;color:#565656;font-size:7.4px;transform:scaleX(0.9);">5</div>
<div class="cell" style="left:56.70px;width:32.3px;top:199.18px;color:#565656;font-size:7.4px;transform:scaleX(0.9);">1448<span style="display:inline-block;width:3.6px;text-align:center">.</span>2</div>
<div class="cell" style="left:89.00px;width:32.5px;top:199.18px;color:#565656;font-size:7.4px;transform:scaleX(0.9);">2180</div>
<div class="cell" style="left:123.00px;width:33.099999999999994px;top:199.18px;color:#565656;font-size:7.4px;transform:scaleX(0.9);">0</div>
<div class="cell" style="left:155.80px;width:32.30000000000001px;top:199.07px;color:#f41414;font-size:7.6px;-webkit-text-stroke:0.12px #f41414;">16</div>
<div class="cell" style="left:187.40px;width:39.29999999999998px;top:198.78px;color:#565656;font-size:7.4px;transform:scaleX(0.9);">2180</div>
<div class="cell" style="left:228.20px;width:334.50000000000006px;top:199.29px;color:#565656;font-size:7.2px;transform:scaleX(0.945);">697<svg class="ar" width="8.2" height="5" viewBox="0 0 8.2 5"><path d="M0.4 2.5 H5.4" stroke="#7a7a7a" stroke-width="1"/><path d="M4.8 0.9 L8.1 2.5 L4.8 4.1z" fill="#7a7a7a"/></svg>2063<svg class="ar" width="8.2" height="5" viewBox="0 0 8.2 5"><path d="M0.4 2.5 H5.4" stroke="#7a7a7a" stroke-width="1"/><path d="M4.8 0.9 L8.1 2.5 L4.8 4.1z" fill="#7a7a7a"/></svg>963<svg class="ar" width="8.2" height="5" viewBox="0 0 8.2 5"><path d="M0.4 2.5 H5.4" stroke="#7a7a7a" stroke-width="1"/><path d="M4.8 0.9 L8.1 2.5 L4.8 4.1z" fill="#7a7a7a"/></svg>2180<svg class="ar" width="8.2" height="5" viewBox="0 0 8.2 5"><path d="M0.4 2.5 H5.4" stroke="#7a7a7a" stroke-width="1"/><path d="M4.8 0.9 L8.1 2.5 L4.8 4.1z" fill="#7a7a7a"/></svg>?</div>
<div class="cell" style="left:562.7px;width:31.299999999999955px;top:199.18px;color:#188818;-webkit-text-stroke:0.12px #188818;font-size:7.4px;text-align:right;letter-spacing:0.3px;transform:scaleX(0.9);transform-origin:100% 50%;">1475<span style="display:inline-block;width:3.4px;text-align:center">.</span>75</div>
<div class="cell" style="left:604.90px;width:20px;text-align:left;transform-origin:0 50%;top:199.18px;color:#565656;font-size:7.4px;transform:scaleX(0.9);">17</div>
<div class="cell" style="left:-0.50px;width:25.400000000000002px;top:210.35px;font-weight:bold;color:#0a14f0;font-size:8px;">305</div>
<div class="cell" style="left:24.70px;width:33.5px;top:210.68px;color:#565656;font-size:7.4px;transform:scaleX(0.9);">7</div>
<div class="cell" style="left:56.70px;width:32.3px;top:210.68px;color:#565656;font-size:7.4px;transform:scaleX(0.9);">1034<span style="display:inline-block;width:3.6px;text-align:center">.</span>4</div>
<div class="cell" style="left:89.00px;width:32.5px;top:210.68px;color:#565656;font-size:7.4px;transform:scaleX(0.9);">1701</div>
<div class="cell" style="left:123.00px;width:33.099999999999994px;top:210.68px;color:#565656;font-size:7.4px;transform:scaleX(0.9);">0</div>
<div class="cell" style="left:155.80px;width:32.30000000000001px;top:210.57px;color:#f41414;font-size:7.6px;-webkit-text-stroke:0.12px #f41414;">17</div>
<div class="cell" style="left:187.40px;width:39.29999999999998px;top:210.28px;color:#565656;font-size:7.4px;transform:scaleX(0.9);">256</div>
<div class="cell" style="left:228.20px;width:334.50000000000006px;top:210.79px;color:#565656;font-size:7.2px;transform:scaleX(0.945);">2504<svg class="ar" width="8.2" height="5" viewBox="0 0 8.2 5"><path d="M0.4 2.5 H5.4" stroke="#7a7a7a" stroke-width="1"/><path d="M4.8 0.9 L8.1 2.5 L4.8 4.1z" fill="#7a7a7a"/></svg>334<svg class="ar" width="8.2" height="5" viewBox="0 0 8.2 5"><path d="M0.4 2.5 H5.4" stroke="#7a7a7a" stroke-width="1"/><path d="M4.8 0.9 L8.1 2.5 L4.8 4.1z" fill="#7a7a7a"/></svg>500<svg class="ar" width="8.2" height="5" viewBox="0 0 8.2 5"><path d="M0.4 2.5 H5.4" stroke="#7a7a7a" stroke-width="1"/><path d="M4.8 0.9 L8.1 2.5 L4.8 4.1z" fill="#7a7a7a"/></svg>256<svg class="ar" width="8.2" height="5" viewBox="0 0 8.2 5"><path d="M0.4 2.5 H5.4" stroke="#7a7a7a" stroke-width="1"/><path d="M4.8 0.9 L8.1 2.5 L4.8 4.1z" fill="#7a7a7a"/></svg>?</div>
<div class="cell" style="left:562.7px;width:31.299999999999955px;top:210.68px;color:#188818;-webkit-text-stroke:0.12px #188818;font-size:7.4px;text-align:right;letter-spacing:0.3px;transform:scaleX(0.9);transform-origin:100% 50%;">1315<span style="display:inline-block;width:3.4px;text-align:center">.</span>50</div>
<div class="cell" style="left:604.90px;width:20px;text-align:left;transform-origin:0 50%;top:210.68px;color:#565656;font-size:7.4px;transform:scaleX(0.9);">18</div>
<div class="ab" style="left:620.6px;top:0;width:11.399999999999977px;height:214.5px;background:#f0f0f0;border-left:1px solid #e4e4e4"></div>
<div class="ab" style="left:622.0px;top:12.7px;width:8.6px;height:9.4px;background:#cdcdcd"></div>
<svg class="ab" style="left:623.2px;top:4.0px" width="6" height="4" viewBox="0 0 6 4"><path d="M0.6 3.4 L3 0.8 L5.4 3.4" stroke="#222" stroke-width="1" fill="none"/></svg>
<svg class="ab" style="left:623.2px;top:204.7px" width="6" height="4" viewBox="0 0 6 4"><path d="M0.6 0.6 L3 3.2 L5.4 0.6" stroke="#222" stroke-width="1" fill="none"/></svg>
</div>
<div class="ab" style="left:8.0px;top:259.0px;width:634.0px;height:141.2px;background:#fdfdfd;border-left:1px solid #bdbdbd;border-bottom:1px solid #f4f2ea"></div>
<svg class="ab" style="left:0;top:0" width="650" height="409" viewBox="0 0 650 409">
<line x1="38.4" y1="376.30" x2="634.7" y2="376.30" stroke="#ebebeb" stroke-width="0.9"/>
<line x1="35.4" y1="376.30" x2="38.4" y2="376.30" stroke="#888" stroke-width="0.8"/>
<line x1="38.4" y1="362.72" x2="634.7" y2="362.72" stroke="#ebebeb" stroke-width="0.9"/>
<line x1="35.4" y1="362.72" x2="38.4" y2="362.72" stroke="#888" stroke-width="0.8"/>
<line x1="38.4" y1="349.13" x2="634.7" y2="349.13" stroke="#ebebeb" stroke-width="0.9"/>
<line x1="35.4" y1="349.13" x2="38.4" y2="349.13" stroke="#888" stroke-width="0.8"/>
<line x1="38.4" y1="335.55" x2="634.7" y2="335.55" stroke="#ebebeb" stroke-width="0.9"/>
<line x1="35.4" y1="335.55" x2="38.4" y2="335.55" stroke="#888" stroke-width="0.8"/>
<line x1="38.4" y1="321.96" x2="634.7" y2="321.96" stroke="#ebebeb" stroke-width="0.9"/>
<line x1="35.4" y1="321.96" x2="38.4" y2="321.96" stroke="#888" stroke-width="0.8"/>
<line x1="38.4" y1="308.38" x2="634.7" y2="308.38" stroke="#ebebeb" stroke-width="0.9"/>
<line x1="35.4" y1="308.38" x2="38.4" y2="308.38" stroke="#888" stroke-width="0.8"/>
<line x1="38.4" y1="294.79" x2="634.7" y2="294.79" stroke="#ebebeb" stroke-width="0.9"/>
<line x1="35.4" y1="294.79" x2="38.4" y2="294.79" stroke="#888" stroke-width="0.8"/>
<line x1="38.4" y1="281.21" x2="634.7" y2="281.21" stroke="#ebebeb" stroke-width="0.9"/>
<line x1="35.4" y1="281.21" x2="38.4" y2="281.21" stroke="#888" stroke-width="0.8"/>
<line x1="36.4" y1="372.90" x2="38.4" y2="372.90" stroke="#999" stroke-width="0.7"/>
<line x1="36.4" y1="369.51" x2="38.4" y2="369.51" stroke="#999" stroke-width="0.7"/>
<line x1="36.4" y1="366.11" x2="38.4" y2="366.11" stroke="#999" stroke-width="0.7"/>
<line x1="36.4" y1="359.32" x2="38.4" y2="359.32" stroke="#999" stroke-width="0.7"/>
<line x1="36.4" y1="355.92" x2="38.4" y2="355.92" stroke="#999" stroke-width="0.7"/>
<line x1="36.4" y1="352.53" x2="38.4" y2="352.53" stroke="#999" stroke-width="0.7"/>
<line x1="36.4" y1="345.73" x2="38.4" y2="345.73" stroke="#999" stroke-width="0.7"/>
<line x1="36.4" y1="342.34" x2="38.4" y2="342.34" stroke="#999" stroke-width="0.7"/>
<line x1="36.4" y1="338.94" x2="38.4" y2="338.94" stroke="#999" stroke-width="0.7"/>
<line x1="36.4" y1="332.15" x2="38.4" y2="332.15" stroke="#999" stroke-width="0.7"/>
<line x1="36.4" y1="328.75" x2="38.4" y2="328.75" stroke="#999" stroke-width="0.7"/>
<line x1="36.4" y1="325.36" x2="38.4" y2="325.36" stroke="#999" stroke-width="0.7"/>
<line x1="36.4" y1="318.56" x2="38.4" y2="318.56" stroke="#999" stroke-width="0.7"/>
<line x1="36.4" y1="315.17" x2="38.4" y2="315.17" stroke="#999" stroke-width="0.7"/>
<line x1="36.4" y1="311.77" x2="38.4" y2="311.77" stroke="#999" stroke-width="0.7"/>
<line x1="36.4" y1="304.98" x2="38.4" y2="304.98" stroke="#999" stroke-width="0.7"/>
<line x1="36.4" y1="301.58" x2="38.4" y2="301.58" stroke="#999" stroke-width="0.7"/>
<line x1="36.4" y1="298.19" x2="38.4" y2="298.19" stroke="#999" stroke-width="0.7"/>
<line x1="36.4" y1="291.39" x2="38.4" y2="291.39" stroke="#999" stroke-width="0.7"/>
<line x1="36.4" y1="288.00" x2="38.4" y2="288.00" stroke="#999" stroke-width="0.7"/>
<line x1="36.4" y1="284.60" x2="38.4" y2="284.60" stroke="#999" stroke-width="0.7"/>
<line x1="45.50" y1="271" x2="45.50" y2="383.0" stroke="#ebebeb" stroke-width="0.9"/>
<line x1="45.50" y1="384.5" x2="45.50" y2="387.0" stroke="#888" stroke-width="0.8"/>
<line x1="57.39" y1="271" x2="57.39" y2="383.0" stroke="#ebebeb" stroke-width="0.9"/>
<line x1="57.39" y1="384.5" x2="57.39" y2="387.0" stroke="#888" stroke-width="0.8"/>
<line x1="69.28" y1="271" x2="69.28" y2="383.0" stroke="#ebebeb" stroke-width="0.9"/>
<line x1="69.28" y1="384.5" x2="69.28" y2="387.0" stroke="#888" stroke-width="0.8"/>
<line x1="81.17" y1="271" x2="81.17" y2="383.0" stroke="#ebebeb" stroke-width="0.9"/>
<line x1="81.17" y1="384.5" x2="81.17" y2="387.0" stroke="#888" stroke-width="0.8"/>
<line x1="93.06" y1="271" x2="93.06" y2="383.0" stroke="#ebebeb" stroke-width="0.9"/>
<line x1="93.06" y1="384.5" x2="93.06" y2="387.0" stroke="#888" stroke-width="0.8"/>
<line x1="104.95" y1="271" x2="104.95" y2="383.0" stroke="#ebebeb" stroke-width="0.9"/>
<line x1="104.95" y1="384.5" x2="104.95" y2="387.0" stroke="#888" stroke-width="0.8"/>
<line x1="116.84" y1="271" x2="116.84" y2="383.0" stroke="#ebebeb" stroke-width="0.9"/>
<line x1="116.84" y1="384.5" x2="116.84" y2="387.0" stroke="#888" stroke-width="0.8"/>
<line x1="128.73" y1="271" x2="128.73" y2="383.0" stroke="#ebebeb" stroke-width="0.9"/>
<line x1="128.73" y1="384.5" x2="128.73" y2="387.0" stroke="#888" stroke-width="0.8"/>
<line x1="140.62" y1="271" x2="140.62" y2="383.0" stroke="#ebebeb" stroke-width="0.9"/>
<line x1="140.62" y1="384.5" x2="140.62" y2="387.0" stroke="#888" stroke-width="0.8"/>
<line x1="152.51" y1="271" x2="152.51" y2="383.0" stroke="#ebebeb" stroke-width="0.9"/>
<line x1="152.51" y1="384.5" x2="152.51" y2="387.0" stroke="#888" stroke-width="0.8"/>
<line x1="164.40" y1="271" x2="164.40" y2="383.0" stroke="#ebebeb" stroke-width="0.9"/>
<line x1="164.40" y1="384.5" x2="164.40" y2="387.0" stroke="#888" stroke-width="0.8"/>
<line x1="176.29" y1="271" x2="176.29" y2="383.0" stroke="#ebebeb" stroke-width="0.9"/>
<line x1="176.29" y1="384.5" x2="176.29" y2="387.0" stroke="#888" stroke-width="0.8"/>
<line x1="188.18" y1="271" x2="188.18" y2="383.0" stroke="#ebebeb" stroke-width="0.9"/>
<line x1="188.18" y1="384.5" x2="188.18" y2="387.0" stroke="#888" stroke-width="0.8"/>
<line x1="200.07" y1="271" x2="200.07" y2="383.0" stroke="#ebebeb" stroke-width="0.9"/>
<line x1="200.07" y1="384.5" x2="200.07" y2="387.0" stroke="#888" stroke-width="0.8"/>
<line x1="211.96" y1="271" x2="211.96" y2="383.0" stroke="#ebebeb" stroke-width="0.9"/>
<line x1="211.96" y1="384.5" x2="211.96" y2="387.0" stroke="#888" stroke-width="0.8"/>
<line x1="223.85" y1="271" x2="223.85" y2="383.0" stroke="#ebebeb" stroke-width="0.9"/>
<line x1="223.85" y1="384.5" x2="223.85" y2="387.0" stroke="#888" stroke-width="0.8"/>
<line x1="235.74" y1="271" x2="235.74" y2="383.0" stroke="#ebebeb" stroke-width="0.9"/>
<line x1="235.74" y1="384.5" x2="235.74" y2="387.0" stroke="#888" stroke-width="0.8"/>
<line x1="247.63" y1="271" x2="247.63" y2="383.0" stroke="#ebebeb" stroke-width="0.9"/>
<line x1="247.63" y1="384.5" x2="247.63" y2="387.0" stroke="#888" stroke-width="0.8"/>
<line x1="259.52" y1="271" x2="259.52" y2="383.0" stroke="#ebebeb" stroke-width="0.9"/>
<line x1="259.52" y1="384.5" x2="259.52" y2="387.0" stroke="#888" stroke-width="0.8"/>
<line x1="271.41" y1="271" x2="271.41" y2="383.0" stroke="#ebebeb" stroke-width="0.9"/>
<line x1="271.41" y1="384.5" x2="271.41" y2="387.0" stroke="#888" stroke-width="0.8"/>
<line x1="283.30" y1="271" x2="283.30" y2="383.0" stroke="#ebebeb" stroke-width="0.9"/>
<line x1="283.30" y1="384.5" x2="283.30" y2="387.0" stroke="#888" stroke-width="0.8"/>
<line x1="295.19" y1="271" x2="295.19" y2="383.0" stroke="#ebebeb" stroke-width="0.9"/>
<line x1="295.19" y1="384.5" x2="295.19" y2="387.0" stroke="#888" stroke-width="0.8"/>
<line x1="307.08" y1="271" x2="307.08" y2="383.0" stroke="#ebebeb" stroke-width="0.9"/>
<line x1="307.08" y1="384.5" x2="307.08" y2="387.0" stroke="#888" stroke-width="0.8"/>
<line x1="318.97" y1="271" x2="318.97" y2="383.0" stroke="#ebebeb" stroke-width="0.9"/>
<line x1="318.97" y1="384.5" x2="318.97" y2="387.0" stroke="#888" stroke-width="0.8"/>
<line x1="330.86" y1="271" x2="330.86" y2="383.0" stroke="#ebebeb" stroke-width="0.9"/>
<line x1="330.86" y1="384.5" x2="330.86" y2="387.0" stroke="#888" stroke-width="0.8"/>
<line x1="342.75" y1="271" x2="342.75" y2="383.0" stroke="#ebebeb" stroke-width="0.9"/>
<line x1="342.75" y1="384.5" x2="342.75" y2="387.0" stroke="#888" stroke-width="0.8"/>
<line x1="354.64" y1="271" x2="354.64" y2="383.0" stroke="#ebebeb" stroke-width="0.9"/>
<line x1="354.64" y1="384.5" x2="354.64" y2="387.0" stroke="#888" stroke-width="0.8"/>
<line x1="366.53" y1="271" x2="366.53" y2="383.0" stroke="#ebebeb" stroke-width="0.9"/>
<line x1="366.53" y1="384.5" x2="366.53" y2="387.0" stroke="#888" stroke-width="0.8"/>
<line x1="378.42" y1="271" x2="378.42" y2="383.0" stroke="#ebebeb" stroke-width="0.9"/>
<line x1="378.42" y1="384.5" x2="378.42" y2="387.0" stroke="#888" stroke-width="0.8"/>
<line x1="390.31" y1="271" x2="390.31" y2="383.0" stroke="#ebebeb" stroke-width="0.9"/>
<line x1="390.31" y1="384.5" x2="390.31" y2="387.0" stroke="#888" stroke-width="0.8"/>
<line x1="402.20" y1="271" x2="402.20" y2="383.0" stroke="#ebebeb" stroke-width="0.9"/>
<line x1="402.20" y1="384.5" x2="402.20" y2="387.0" stroke="#888" stroke-width="0.8"/>
<line x1="414.09" y1="271" x2="414.09" y2="383.0" stroke="#ebebeb" stroke-width="0.9"/>
<line x1="414.09" y1="384.5" x2="414.09" y2="387.0" stroke="#888" stroke-width="0.8"/>
<line x1="425.98" y1="271" x2="425.98" y2="383.0" stroke="#ebebeb" stroke-width="0.9"/>
<line x1="425.98" y1="384.5" x2="425.98" y2="387.0" stroke="#888" stroke-width="0.8"/>
<line x1="437.87" y1="271" x2="437.87" y2="383.0" stroke="#ebebeb" stroke-width="0.9"/>
<line x1="437.87" y1="384.5" x2="437.87" y2="387.0" stroke="#888" stroke-width="0.8"/>
<line x1="449.76" y1="271" x2="449.76" y2="383.0" stroke="#ebebeb" stroke-width="0.9"/>
<line x1="449.76" y1="384.5" x2="449.76" y2="387.0" stroke="#888" stroke-width="0.8"/>
<line x1="461.65" y1="271" x2="461.65" y2="383.0" stroke="#ebebeb" stroke-width="0.9"/>
<line x1="461.65" y1="384.5" x2="461.65" y2="387.0" stroke="#888" stroke-width="0.8"/>
<line x1="473.54" y1="271" x2="473.54" y2="383.0" stroke="#ebebeb" stroke-width="0.9"/>
<line x1="473.54" y1="384.5" x2="473.54" y2="387.0" stroke="#888" stroke-width="0.8"/>
<line x1="485.43" y1="271" x2="485.43" y2="383.0" stroke="#ebebeb" stroke-width="0.9"/>
<line x1="485.43" y1="384.5" x2="485.43" y2="387.0" stroke="#888" stroke-width="0.8"/>
<line x1="497.32" y1="271" x2="497.32" y2="383.0" stroke="#ebebeb" stroke-width="0.9"/>
<line x1="497.32" y1="384.5" x2="497.32" y2="387.0" stroke="#888" stroke-width="0.8"/>
<line x1="509.21" y1="271" x2="509.21" y2="383.0" stroke="#ebebeb" stroke-width="0.9"/>
<line x1="509.21" y1="384.5" x2="509.21" y2="387.0" stroke="#888" stroke-width="0.8"/>
<line x1="521.10" y1="271" x2="521.10" y2="383.0" stroke="#ebebeb" stroke-width="0.9"/>
<line x1="521.10" y1="384.5" x2="521.10" y2="387.0" stroke="#888" stroke-width="0.8"/>
<line x1="532.99" y1="271" x2="532.99" y2="383.0" stroke="#ebebeb" stroke-width="0.9"/>
<line x1="532.99" y1="384.5" x2="532.99" y2="387.0" stroke="#888" stroke-width="0.8"/>
<line x1="544.88" y1="271" x2="544.88" y2="383.0" stroke="#ebebeb" stroke-width="0.9"/>
<line x1="544.88" y1="384.5" x2="544.88" y2="387.0" stroke="#888" stroke-width="0.8"/>
<line x1="556.77" y1="271" x2="556.77" y2="383.0" stroke="#ebebeb" stroke-width="0.9"/>
<line x1="556.77" y1="384.5" x2="556.77" y2="387.0" stroke="#888" stroke-width="0.8"/>
<line x1="568.66" y1="271" x2="568.66" y2="383.0" stroke="#ebebeb" stroke-width="0.9"/>
<line x1="568.66" y1="384.5" x2="568.66" y2="387.0" stroke="#888" stroke-width="0.8"/>
<line x1="580.55" y1="271" x2="580.55" y2="383.0" stroke="#ebebeb" stroke-width="0.9"/>
<line x1="580.55" y1="384.5" x2="580.55" y2="387.0" stroke="#888" stroke-width="0.8"/>
<line x1="592.44" y1="271" x2="592.44" y2="383.0" stroke="#ebebeb" stroke-width="0.9"/>
<line x1="592.44" y1="384.5" x2="592.44" y2="387.0" stroke="#888" stroke-width="0.8"/>
<line x1="604.33" y1="271" x2="604.33" y2="383.0" stroke="#ebebeb" stroke-width="0.9"/>
<line x1="604.33" y1="384.5" x2="604.33" y2="387.0" stroke="#888" stroke-width="0.8"/>
<line x1="616.22" y1="271" x2="616.22" y2="383.0" stroke="#ebebeb" stroke-width="0.9"/>
<line x1="616.22" y1="384.5" x2="616.22" y2="387.0" stroke="#888" stroke-width="0.8"/>
<line x1="628.11" y1="271" x2="628.11" y2="383.0" stroke="#ebebeb" stroke-width="0.9"/>
<line x1="628.11" y1="384.5" x2="628.11" y2="387.0" stroke="#888" stroke-width="0.8"/>
<line x1="38.4" y1="271" x2="38.4" y2="384.0" stroke="#000" stroke-width="1.6"/>
<line x1="37.6" y1="383.0" x2="636.2" y2="383.0" stroke="#000" stroke-width="1.8"/>
<line x1="38.4" y1="384.6" x2="636.2" y2="384.6" stroke="#555" stroke-width="1" stroke-dasharray="2 1.2"/>
<line x1="45.10" y1="313.00" x2="56.99" y2="372.55" stroke="#ee5a5a" stroke-width="1"/>
<line x1="56.99" y1="372.55" x2="68.88" y2="332.70" stroke="#5aa65a" stroke-width="1"/>
<line x1="68.88" y1="332.70" x2="80.77" y2="369.41" stroke="#5aa65a" stroke-width="1"/>
<line x1="80.77" y1="369.41" x2="92.66" y2="279.00" stroke="#ee5a5a" stroke-width="1"/>
<line x1="92.66" y1="279.00" x2="104.55" y2="368.05" stroke="#5aa65a" stroke-width="1"/>
<line x1="104.55" y1="368.05" x2="116.44" y2="338.80" stroke="#5aa65a" stroke-width="1"/>
<line x1="116.44" y1="338.80" x2="128.33" y2="359.92" stroke="#5aa65a" stroke-width="1"/>
<line x1="128.33" y1="359.92" x2="140.22" y2="360.25" stroke="#5aa65a" stroke-width="1"/>
<line x1="140.22" y1="360.25" x2="152.11" y2="375.72" stroke="#5aa65a" stroke-width="1"/>
<line x1="152.11" y1="375.72" x2="164.00" y2="336.50" stroke="#ee5a5a" stroke-width="1"/>
<line x1="164.00" y1="336.50" x2="175.89" y2="358.02" stroke="#ee5a5a" stroke-width="1"/>
<line x1="175.89" y1="358.02" x2="187.78" y2="344.70" stroke="#5aa65a" stroke-width="1"/>
<line x1="187.78" y1="344.70" x2="199.67" y2="318.30" stroke="#5aa65a" stroke-width="1"/>
<line x1="199.67" y1="318.30" x2="211.56" y2="372.25" stroke="#5aa65a" stroke-width="1"/>
<line x1="211.56" y1="372.25" x2="223.45" y2="325.30" stroke="#5aa65a" stroke-width="1"/>
<line x1="223.45" y1="325.30" x2="235.34" y2="357.54" stroke="#ee5a5a" stroke-width="1"/>
<line x1="235.34" y1="357.54" x2="247.23" y2="324.20" stroke="#5aa65a" stroke-width="1"/>
<line x1="247.23" y1="324.20" x2="259.12" y2="364.50" stroke="#5aa65a" stroke-width="1"/>
<line x1="259.12" y1="364.50" x2="271.01" y2="366.21" stroke="#5aa65a" stroke-width="1"/>
<line x1="271.01" y1="366.21" x2="282.90" y2="349.10" stroke="#5aa65a" stroke-width="1"/>
<line x1="282.90" y1="349.10" x2="294.79" y2="348.20" stroke="#ee5a5a" stroke-width="1"/>
<line x1="294.79" y1="348.20" x2="306.68" y2="361.57" stroke="#ee5a5a" stroke-width="1"/>
<line x1="306.68" y1="361.57" x2="318.57" y2="365.07" stroke="#5aa65a" stroke-width="1"/>
<line x1="318.57" y1="365.07" x2="330.46" y2="367.92" stroke="#ee5a5a" stroke-width="1"/>
<line x1="330.46" y1="367.92" x2="342.35" y2="355.53" stroke="#5aa65a" stroke-width="1"/>
<line x1="342.35" y1="355.53" x2="354.24" y2="335.20" stroke="#5aa65a" stroke-width="1"/>
<line x1="354.24" y1="335.20" x2="366.13" y2="374.66" stroke="#5aa65a" stroke-width="1"/>
<line x1="366.13" y1="374.66" x2="378.02" y2="358.54" stroke="#5aa65a" stroke-width="1"/>
<line x1="378.02" y1="358.54" x2="389.91" y2="356.80" stroke="#5aa65a" stroke-width="1"/>
<line x1="389.91" y1="356.80" x2="401.80" y2="359.19" stroke="#5aa65a" stroke-width="1"/>
<line x1="401.80" y1="359.19" x2="413.69" y2="328.50" stroke="#5aa65a" stroke-width="1"/>
<line x1="413.69" y1="328.50" x2="425.58" y2="369.16" stroke="#5aa65a" stroke-width="1"/>
<line x1="425.58" y1="369.16" x2="437.47" y2="317.02" stroke="#5aa65a" stroke-width="1"/>
<line x1="437.47" y1="317.02" x2="449.36" y2="297.00" stroke="#5aa65a" stroke-width="1"/>
<line x1="449.36" y1="297.00" x2="461.25" y2="355.34" stroke="#5aa65a" stroke-width="1"/>
<line x1="461.25" y1="355.34" x2="473.14" y2="311.98" stroke="#ee5a5a" stroke-width="1"/>
<line x1="473.14" y1="311.98" x2="485.03" y2="322.44" stroke="#ee5a5a" stroke-width="1"/>
<line x1="485.03" y1="322.44" x2="496.92" y2="343.93" stroke="#5aa65a" stroke-width="1"/>
<line x1="496.92" y1="343.93" x2="508.81" y2="344.96" stroke="#5aa65a" stroke-width="1"/>
<line x1="508.81" y1="344.96" x2="520.70" y2="366.91" stroke="#5aa65a" stroke-width="1"/>
<line x1="520.70" y1="366.91" x2="532.59" y2="372.98" stroke="#5aa65a" stroke-width="1"/>
<line x1="532.59" y1="372.98" x2="544.48" y2="375.53" stroke="#5aa65a" stroke-width="1"/>
<line x1="544.48" y1="375.53" x2="556.37" y2="324.07" stroke="#5aa65a" stroke-width="1"/>
<line x1="556.37" y1="324.07" x2="568.26" y2="368.51" stroke="#5aa65a" stroke-width="1"/>
<line x1="568.26" y1="368.51" x2="580.15" y2="341.63" stroke="#5aa65a" stroke-width="1"/>
<line x1="580.15" y1="341.63" x2="592.04" y2="369.87" stroke="#5aa65a" stroke-width="1"/>
<line x1="592.04" y1="369.87" x2="603.93" y2="352.63" stroke="#5aa65a" stroke-width="1"/>
<line x1="603.93" y1="352.63" x2="615.82" y2="346.75" stroke="#ee5a5a" stroke-width="1"/>
<line x1="615.82" y1="346.75" x2="627.71" y2="350.11" stroke="#5aa65a" stroke-width="1"/>
<defs><radialGradient id="gg" cx="0.45" cy="0.4" r="0.6"><stop offset="0" stop-color="#2a8a2a"/><stop offset="1" stop-color="#0d6a0d"/></radialGradient><radialGradient id="rg" cx="0.45" cy="0.4" r="0.6"><stop offset="0" stop-color="#ff2a2a"/><stop offset="1" stop-color="#f00a0a"/></radialGradient></defs>
<circle cx="46.40" cy="314.40" r="5.9" fill="#b4bcbc" opacity="0.7"/>
<circle cx="45.10" cy="313.00" r="6.1" fill="#fdfdfd"/>
<circle cx="45.10" cy="313.00" r="5.45" fill="url(#gg)"/>
<circle cx="58.29" cy="373.95" r="5.9" fill="#b4bcbc" opacity="0.7"/>
<circle cx="56.99" cy="372.55" r="6.1" fill="#fdfdfd"/>
<circle cx="56.99" cy="372.55" r="5.45" fill="url(#rg)"/>
<circle cx="70.18" cy="334.10" r="5.9" fill="#b4bcbc" opacity="0.7"/>
<circle cx="68.88" cy="332.70" r="6.1" fill="#fdfdfd"/>
<circle cx="68.88" cy="332.70" r="5.45" fill="url(#gg)"/>
<circle cx="82.07" cy="370.81" r="5.9" fill="#b4bcbc" opacity="0.7"/>
<circle cx="80.77" cy="369.41" r="6.1" fill="#fdfdfd"/>
<circle cx="80.77" cy="369.41" r="5.45" fill="url(#gg)"/>
<circle cx="93.96" cy="280.40" r="5.9" fill="#b4bcbc" opacity="0.7"/>
<circle cx="92.66" cy="279.00" r="6.1" fill="#fdfdfd"/>
<circle cx="92.66" cy="279.00" r="5.45" fill="url(#rg)"/>
<circle cx="105.85" cy="369.45" r="5.9" fill="#b4bcbc" opacity="0.7"/>
<circle cx="104.55" cy="368.05" r="6.1" fill="#fdfdfd"/>
<circle cx="104.55" cy="368.05" r="5.45" fill="url(#gg)"/>
<circle cx="117.74" cy="340.20" r="5.9" fill="#b4bcbc" opacity="0.7"/>
<circle cx="116.44" cy="338.80" r="6.1" fill="#fdfdfd"/>
<circle cx="116.44" cy="338.80" r="5.45" fill="url(#gg)"/>
<circle cx="129.63" cy="361.32" r="5.9" fill="#b4bcbc" opacity="0.7"/>
<circle cx="128.33" cy="359.92" r="6.1" fill="#fdfdfd"/>
<circle cx="128.33" cy="359.92" r="5.45" fill="url(#gg)"/>
<circle cx="141.52" cy="361.65" r="5.9" fill="#b4bcbc" opacity="0.7"/>
<circle cx="140.22" cy="360.25" r="6.1" fill="#fdfdfd"/>
<circle cx="140.22" cy="360.25" r="5.45" fill="url(#gg)"/>
<circle cx="153.41" cy="377.12" r="5.9" fill="#b4bcbc" opacity="0.7"/>
<circle cx="152.11" cy="375.72" r="6.1" fill="#fdfdfd"/>
<circle cx="152.11" cy="375.72" r="5.45" fill="url(#gg)"/>
<circle cx="165.30" cy="337.90" r="5.9" fill="#b4bcbc" opacity="0.7"/>
<circle cx="164.00" cy="336.50" r="6.1" fill="#fdfdfd"/>
<circle cx="164.00" cy="336.50" r="5.45" fill="url(#rg)"/>
<circle cx="177.19" cy="359.42" r="5.9" fill="#b4bcbc" opacity="0.7"/>
<circle cx="175.89" cy="358.02" r="6.1" fill="#fdfdfd"/>
<circle cx="175.89" cy="358.02" r="5.45" fill="url(#rg)"/>
<circle cx="189.08" cy="346.10" r="5.9" fill="#b4bcbc" opacity="0.7"/>
<circle cx="187.78" cy="344.70" r="6.1" fill="#fdfdfd"/>
<circle cx="187.78" cy="344.70" r="5.45" fill="url(#gg)"/>
<circle cx="200.97" cy="319.70" r="5.9" fill="#b4bcbc" opacity="0.7"/>
<circle cx="199.67" cy="318.30" r="6.1" fill="#fdfdfd"/>
<circle cx="199.67" cy="318.30" r="5.45" fill="url(#gg)"/>
<circle cx="212.86" cy="373.65" r="5.9" fill="#b4bcbc" opacity="0.7"/>
<circle cx="211.56" cy="372.25" r="6.1" fill="#fdfdfd"/>
<circle cx="211.56" cy="372.25" r="5.45" fill="url(#gg)"/>
<circle cx="224.75" cy="326.70" r="5.9" fill="#b4bcbc" opacity="0.7"/>
<circle cx="223.45" cy="325.30" r="6.1" fill="#fdfdfd"/>
<circle cx="223.45" cy="325.30" r="5.45" fill="url(#gg)"/>
<circle cx="236.64" cy="358.94" r="5.9" fill="#b4bcbc" opacity="0.7"/>
<circle cx="235.34" cy="357.54" r="6.1" fill="#fdfdfd"/>
<circle cx="235.34" cy="357.54" r="5.45" fill="url(#rg)"/>
<circle cx="248.53" cy="325.60" r="5.9" fill="#b4bcbc" opacity="0.7"/>
<circle cx="247.23" cy="324.20" r="6.1" fill="#fdfdfd"/>
<circle cx="247.23" cy="324.20" r="5.45" fill="url(#gg)"/>
<circle cx="260.42" cy="365.90" r="5.9" fill="#b4bcbc" opacity="0.7"/>
<circle cx="259.12" cy="364.50" r="6.1" fill="#fdfdfd"/>
<circle cx="259.12" cy="364.50" r="5.45" fill="url(#gg)"/>
<circle cx="272.31" cy="367.61" r="5.9" fill="#b4bcbc" opacity="0.7"/>
<circle cx="271.01" cy="366.21" r="6.1" fill="#fdfdfd"/>
<circle cx="271.01" cy="366.21" r="5.45" fill="url(#gg)"/>
<circle cx="284.20" cy="350.50" r="5.9" fill="#b4bcbc" opacity="0.7"/>
<circle cx="282.90" cy="349.10" r="6.1" fill="#fdfdfd"/>
<circle cx="282.90" cy="349.10" r="5.45" fill="url(#gg)"/>
<circle cx="296.09" cy="349.60" r="5.9" fill="#b4bcbc" opacity="0.7"/>
<circle cx="294.79" cy="348.20" r="6.1" fill="#fdfdfd"/>
<circle cx="294.79" cy="348.20" r="5.45" fill="url(#rg)"/>
<circle cx="307.98" cy="362.97" r="5.9" fill="#b4bcbc" opacity="0.7"/>
<circle cx="306.68" cy="361.57" r="6.1" fill="#fdfdfd"/>
<circle cx="306.68" cy="361.57" r="5.45" fill="url(#rg)"/>
<circle cx="319.87" cy="366.47" r="5.9" fill="#b4bcbc" opacity="0.7"/>
<circle cx="318.57" cy="365.07" r="6.1" fill="#fdfdfd"/>
<circle cx="318.57" cy="365.07" r="5.45" fill="url(#gg)"/>
<circle cx="331.76" cy="369.32" r="5.9" fill="#b4bcbc" opacity="0.7"/>
<circle cx="330.46" cy="367.92" r="6.1" fill="#fdfdfd"/>
<circle cx="330.46" cy="367.92" r="5.45" fill="url(#rg)"/>
<circle cx="343.65" cy="356.93" r="5.9" fill="#b4bcbc" opacity="0.7"/>
<circle cx="342.35" cy="355.53" r="6.1" fill="#fdfdfd"/>
<circle cx="342.35" cy="355.53" r="5.45" fill="url(#gg)"/>
<circle cx="355.54" cy="336.60" r="5.9" fill="#b4bcbc" opacity="0.7"/>
<circle cx="354.24" cy="335.20" r="6.1" fill="#fdfdfd"/>
<circle cx="354.24" cy="335.20" r="5.45" fill="url(#gg)"/>
<circle cx="367.43" cy="376.06" r="5.9" fill="#b4bcbc" opacity="0.7"/>
<circle cx="366.13" cy="374.66" r="6.1" fill="#fdfdfd"/>
<circle cx="366.13" cy="374.66" r="5.45" fill="url(#gg)"/>
<circle cx="379.32" cy="359.94" r="5.9" fill="#b4bcbc" opacity="0.7"/>
<circle cx="378.02" cy="358.54" r="6.1" fill="#fdfdfd"/>
<circle cx="378.02" cy="358.54" r="5.45" fill="url(#gg)"/>
<circle cx="391.21" cy="358.20" r="5.9" fill="#b4bcbc" opacity="0.7"/>
<circle cx="389.91" cy="356.80" r="6.1" fill="#fdfdfd"/>
<circle cx="389.91" cy="356.80" r="5.45" fill="url(#gg)"/>
<circle cx="403.10" cy="360.59" r="5.9" fill="#b4bcbc" opacity="0.7"/>
<circle cx="401.80" cy="359.19" r="6.1" fill="#fdfdfd"/>
<circle cx="401.80" cy="359.19" r="5.45" fill="url(#gg)"/>
<circle cx="414.99" cy="329.90" r="5.9" fill="#b4bcbc" opacity="0.7"/>
<circle cx="413.69" cy="328.50" r="6.1" fill="#fdfdfd"/>
<circle cx="413.69" cy="328.50" r="5.45" fill="url(#gg)"/>
<circle cx="426.88" cy="370.56" r="5.9" fill="#b4bcbc" opacity="0.7"/>
<circle cx="425.58" cy="369.16" r="6.1" fill="#fdfdfd"/>
<circle cx="425.58" cy="369.16" r="5.45" fill="url(#gg)"/>
<circle cx="438.77" cy="318.42" r="5.9" fill="#b4bcbc" opacity="0.7"/>
<circle cx="437.47" cy="317.02" r="6.1" fill="#fdfdfd"/>
<circle cx="437.47" cy="317.02" r="5.45" fill="url(#gg)"/>
<circle cx="450.66" cy="298.40" r="5.9" fill="#b4bcbc" opacity="0.7"/>
<circle cx="449.36" cy="297.00" r="6.1" fill="#fdfdfd"/>
<circle cx="449.36" cy="297.00" r="5.45" fill="url(#gg)"/>
<circle cx="462.55" cy="356.74" r="5.9" fill="#b4bcbc" opacity="0.7"/>
<circle cx="461.25" cy="355.34" r="6.1" fill="#fdfdfd"/>
<circle cx="461.25" cy="355.34" r="5.45" fill="url(#gg)"/>
<circle cx="474.44" cy="313.38" r="5.9" fill="#b4bcbc" opacity="0.7"/>
<circle cx="473.14" cy="311.98" r="6.1" fill="#fdfdfd"/>
<circle cx="473.14" cy="311.98" r="5.45" fill="url(#rg)"/>
<circle cx="486.33" cy="323.84" r="5.9" fill="#b4bcbc" opacity="0.7"/>
<circle cx="485.03" cy="322.44" r="6.1" fill="#fdfdfd"/>
<circle cx="485.03" cy="322.44" r="5.45" fill="url(#rg)"/>
<circle cx="498.22" cy="345.33" r="5.9" fill="#b4bcbc" opacity="0.7"/>
<circle cx="496.92" cy="343.93" r="6.1" fill="#fdfdfd"/>
<circle cx="496.92" cy="343.93" r="5.45" fill="url(#gg)"/>
<circle cx="510.11" cy="346.36" r="5.9" fill="#b4bcbc" opacity="0.7"/>
<circle cx="508.81" cy="344.96" r="6.1" fill="#fdfdfd"/>
<circle cx="508.81" cy="344.96" r="5.45" fill="url(#gg)"/>
<circle cx="522.00" cy="368.31" r="5.9" fill="#b4bcbc" opacity="0.7"/>
<circle cx="520.70" cy="366.91" r="6.1" fill="#fdfdfd"/>
<circle cx="520.70" cy="366.91" r="5.45" fill="url(#gg)"/>
<circle cx="533.89" cy="374.38" r="5.9" fill="#b4bcbc" opacity="0.7"/>
<circle cx="532.59" cy="372.98" r="6.1" fill="#fdfdfd"/>
<circle cx="532.59" cy="372.98" r="5.45" fill="url(#gg)"/>
<circle cx="545.78" cy="376.93" r="5.9" fill="#b4bcbc" opacity="0.7"/>
<circle cx="544.48" cy="375.53" r="6.1" fill="#fdfdfd"/>
<circle cx="544.48" cy="375.53" r="5.45" fill="url(#gg)"/>
<circle cx="557.67" cy="325.47" r="5.9" fill="#b4bcbc" opacity="0.7"/>
<circle cx="556.37" cy="324.07" r="6.1" fill="#fdfdfd"/>
<circle cx="556.37" cy="324.07" r="5.45" fill="url(#gg)"/>
<circle cx="569.56" cy="369.91" r="5.9" fill="#b4bcbc" opacity="0.7"/>
<circle cx="568.26" cy="368.51" r="6.1" fill="#fdfdfd"/>
<circle cx="568.26" cy="368.51" r="5.45" fill="url(#gg)"/>
<circle cx="581.45" cy="343.03" r="5.9" fill="#b4bcbc" opacity="0.7"/>
<circle cx="580.15" cy="341.63" r="6.1" fill="#fdfdfd"/>
<circle cx="580.15" cy="341.63" r="5.45" fill="url(#gg)"/>
<circle cx="593.34" cy="371.27" r="5.9" fill="#b4bcbc" opacity="0.7"/>
<circle cx="592.04" cy="369.87" r="6.1" fill="#fdfdfd"/>
<circle cx="592.04" cy="369.87" r="5.45" fill="url(#gg)"/>
<circle cx="605.23" cy="354.03" r="5.9" fill="#b4bcbc" opacity="0.7"/>
<circle cx="603.93" cy="352.63" r="6.1" fill="#fdfdfd"/>
<circle cx="603.93" cy="352.63" r="5.45" fill="url(#gg)"/>
<circle cx="617.12" cy="348.15" r="5.9" fill="#b4bcbc" opacity="0.7"/>
<circle cx="615.82" cy="346.75" r="6.1" fill="#fdfdfd"/>
<circle cx="615.82" cy="346.75" r="5.45" fill="url(#rg)"/>
<circle cx="629.01" cy="351.51" r="5.9" fill="#b4bcbc" opacity="0.7"/>
<circle cx="627.71" cy="350.11" r="6.1" fill="#fdfdfd"/>
<circle cx="627.71" cy="350.11" r="5.45" fill="url(#gg)"/>
</svg>
<div class="t" style="left:39.60px;top:310.10px;width:11px;text-align:center;font-size:5.7px;color:#f4fff4;overflow:hidden">,34</div>
<div class="t" style="left:51.49px;top:369.65px;width:11px;text-align:center;font-size:5.7px;color:#f4fff4;overflow:hidden">131</div>
<div class="t" style="left:63.38px;top:329.80px;width:11px;text-align:center;font-size:5.7px;color:#f4fff4;overflow:hidden">,62</div>
<div class="t" style="left:75.27px;top:366.51px;width:11px;text-align:center;font-size:5.7px;color:#f4fff4;overflow:hidden">247</div>
<div class="t" style="left:87.16px;top:276.10px;width:11px;text-align:center;font-size:5.7px;color:#f4fff4;overflow:hidden">,59</div>
<div class="t" style="left:99.05px;top:365.15px;width:11px;text-align:center;font-size:5.7px;color:#f4fff4;overflow:hidden">297</div>
<div class="t" style="left:110.94px;top:335.90px;width:11px;text-align:center;font-size:5.7px;color:#f4fff4;overflow:hidden">,38</div>
<div class="t" style="left:122.83px;top:357.02px;width:11px;text-align:center;font-size:5.7px;color:#f4fff4;overflow:hidden">597</div>
<div class="t" style="left:134.72px;top:357.35px;width:11px;text-align:center;font-size:5.7px;color:#f4fff4;overflow:hidden">585</div>
<div class="t" style="left:146.61px;top:372.82px;width:11px;text-align:center;font-size:5.7px;color:#f4fff4;overflow:hidden">14</div>
<div class="t" style="left:158.50px;top:333.60px;width:11px;text-align:center;font-size:5.7px;color:#f4fff4;overflow:hidden">,46</div>
<div class="t" style="left:170.39px;top:355.12px;width:11px;text-align:center;font-size:5.7px;color:#f4fff4;overflow:hidden">667</div>
<div class="t" style="left:182.28px;top:341.80px;width:11px;text-align:center;font-size:5.7px;color:#f4fff4;overflow:hidden">,13</div>
<div class="t" style="left:194.17px;top:315.40px;width:11px;text-align:center;font-size:5.7px;color:#f4fff4;overflow:hidden">,14</div>
<div class="t" style="left:206.06px;top:369.35px;width:11px;text-align:center;font-size:5.7px;color:#f4fff4;overflow:hidden">142</div>
<div class="t" style="left:217.95px;top:322.40px;width:11px;text-align:center;font-size:5.7px;color:#f4fff4;overflow:hidden">,86</div>
<div class="t" style="left:229.84px;top:354.64px;width:11px;text-align:center;font-size:5.7px;color:#f4fff4;overflow:hidden">685</div>
<div class="t" style="left:241.73px;top:321.30px;width:11px;text-align:center;font-size:5.7px;color:#f4fff4;overflow:hidden">,90</div>
<div class="t" style="left:253.62px;top:361.60px;width:11px;text-align:center;font-size:5.7px;color:#f4fff4;overflow:hidden">428</div>
<div class="t" style="left:265.51px;top:363.31px;width:11px;text-align:center;font-size:5.7px;color:#f4fff4;overflow:hidden">365</div>
<div class="t" style="left:277.40px;top:346.20px;width:11px;text-align:center;font-size:5.7px;color:#f4fff4;overflow:hidden">,00</div>
<div class="t" style="left:289.29px;top:345.30px;width:11px;text-align:center;font-size:5.7px;color:#f4fff4;overflow:hidden">,01</div>
<div class="t" style="left:301.18px;top:358.67px;width:11px;text-align:center;font-size:5.7px;color:#f4fff4;overflow:hidden">536</div>
<div class="t" style="left:313.07px;top:362.17px;width:11px;text-align:center;font-size:5.7px;color:#f4fff4;overflow:hidden">407</div>
<div class="t" style="left:324.96px;top:365.02px;width:11px;text-align:center;font-size:5.7px;color:#f4fff4;overflow:hidden">302</div>
<div class="t" style="left:336.85px;top:352.63px;width:11px;text-align:center;font-size:5.7px;color:#f4fff4;overflow:hidden">759</div>
<div class="t" style="left:348.74px;top:332.30px;width:11px;text-align:center;font-size:5.7px;color:#f4fff4;overflow:hidden">,46</div>
<div class="t" style="left:360.63px;top:371.76px;width:11px;text-align:center;font-size:5.7px;color:#f4fff4;overflow:hidden">53</div>
<div class="t" style="left:372.52px;top:355.64px;width:11px;text-align:center;font-size:5.7px;color:#f4fff4;overflow:hidden">648</div>
<div class="t" style="left:384.41px;top:353.90px;width:11px;text-align:center;font-size:5.7px;color:#f4fff4;overflow:hidden">712</div>
<div class="t" style="left:396.30px;top:356.29px;width:11px;text-align:center;font-size:5.7px;color:#f4fff4;overflow:hidden">624</div>
<div class="t" style="left:408.19px;top:325.60px;width:11px;text-align:center;font-size:5.7px;color:#f4fff4;overflow:hidden">,73</div>
<div class="t" style="left:420.08px;top:366.26px;width:11px;text-align:center;font-size:5.7px;color:#f4fff4;overflow:hidden">256</div>
<div class="t" style="left:431.97px;top:314.12px;width:11px;text-align:center;font-size:5.7px;color:#f4fff4;overflow:hidden">,18</div>
<div class="t" style="left:443.86px;top:294.10px;width:11px;text-align:center;font-size:5.7px;color:#f4fff4;overflow:hidden">,91</div>
<div class="t" style="left:455.75px;top:352.44px;width:11px;text-align:center;font-size:5.7px;color:#f4fff4;overflow:hidden">766</div>
<div class="t" style="left:467.64px;top:309.08px;width:11px;text-align:center;font-size:5.7px;color:#f4fff4;overflow:hidden">,36</div>
<div class="t" style="left:479.53px;top:319.54px;width:11px;text-align:center;font-size:5.7px;color:#f4fff4;overflow:hidden">,98</div>
<div class="t" style="left:491.42px;top:341.03px;width:11px;text-align:center;font-size:5.7px;color:#f4fff4;overflow:hidden">,18</div>
<div class="t" style="left:503.31px;top:342.06px;width:11px;text-align:center;font-size:5.7px;color:#f4fff4;overflow:hidden">,14</div>
<div class="t" style="left:515.20px;top:364.01px;width:11px;text-align:center;font-size:5.7px;color:#f4fff4;overflow:hidden">339</div>
<div class="t" style="left:527.09px;top:370.08px;width:11px;text-align:center;font-size:5.7px;color:#f4fff4;overflow:hidden">115</div>
<div class="t" style="left:538.98px;top:372.63px;width:11px;text-align:center;font-size:5.7px;color:#f4fff4;overflow:hidden">21</div>
<div class="t" style="left:550.87px;top:321.17px;width:11px;text-align:center;font-size:5.7px;color:#f4fff4;overflow:hidden">,92</div>
<div class="t" style="left:562.76px;top:365.61px;width:11px;text-align:center;font-size:5.7px;color:#f4fff4;overflow:hidden">280</div>
<div class="t" style="left:574.65px;top:338.73px;width:11px;text-align:center;font-size:5.7px;color:#f4fff4;overflow:hidden">,27</div>
<div class="t" style="left:586.54px;top:366.97px;width:11px;text-align:center;font-size:5.7px;color:#f4fff4;overflow:hidden">230</div>
<div class="t" style="left:598.43px;top:349.73px;width:11px;text-align:center;font-size:5.7px;color:#f4fff4;overflow:hidden">866</div>
<div class="t" style="left:610.32px;top:343.85px;width:11px;text-align:center;font-size:5.7px;color:#f4fff4;overflow:hidden">,08</div>
<div class="t" style="left:622.21px;top:347.21px;width:11px;text-align:center;font-size:5.7px;color:#f4fff4;overflow:hidden">959</div>
<div class="t" style="left:0;width:34px;text-align:right;top:372.60px;font-size:7px;color:#2f8cf2;-webkit-text-stroke:0.2px #2f8cf2">0</div>
<div class="t" style="left:0;width:34px;text-align:right;top:359.00px;font-size:7px;color:#2f8cf2;-webkit-text-stroke:0.2px #2f8cf2">500</div>
<div class="t" style="left:0;width:34px;text-align:right;top:345.40px;font-size:7px;color:#2f8cf2;-webkit-text-stroke:0.2px #2f8cf2">1,000</div>
<div class="t" style="left:0;width:34px;text-align:right;top:331.80px;font-size:7px;color:#2f8cf2;-webkit-text-stroke:0.2px #2f8cf2">1,500</div>
<div class="t" style="left:0;width:34px;text-align:right;top:318.20px;font-size:7px;color:#2f8cf2;-webkit-text-stroke:0.2px #2f8cf2">2,000</div>
<div class="t" style="left:0;width:34px;text-align:right;top:304.60px;font-size:7px;color:#2f8cf2;-webkit-text-stroke:0.2px #2f8cf2">2,500</div>
<div class="t" style="left:0;width:34px;text-align:right;top:291.00px;font-size:7px;color:#2f8cf2;-webkit-text-stroke:0.2px #2f8cf2">3,000</div>
<div class="t" style="left:0;width:34px;text-align:right;top:277.40px;font-size:7px;color:#2f8cf2;-webkit-text-stroke:0.2px #2f8cf2">3,500</div>
<div class="t" style="left:38.50px;top:388.70px;width:14px;text-align:center;font-size:8px;color:#2088f4;-webkit-text-stroke:0.3px #2088f4;transform:rotate(90deg) scaleX(0.86)">089</div>
<div class="t" style="left:50.39px;top:388.70px;width:14px;text-align:center;font-size:8px;color:#2088f4;-webkit-text-stroke:0.3px #2088f4;transform:rotate(90deg) scaleX(0.86)">090</div>
<div class="t" style="left:62.28px;top:388.70px;width:14px;text-align:center;font-size:8px;color:#2088f4;-webkit-text-stroke:0.3px #2088f4;transform:rotate(90deg) scaleX(0.86)">091</div>
<div class="t" style="left:74.17px;top:388.70px;width:14px;text-align:center;font-size:8px;color:#2088f4;-webkit-text-stroke:0.3px #2088f4;transform:rotate(90deg) scaleX(0.86)">092</div>
<div class="t" style="left:86.06px;top:388.70px;width:14px;text-align:center;font-size:8px;color:#2088f4;-webkit-text-stroke:0.3px #2088f4;transform:rotate(90deg) scaleX(0.86)">093</div>
<div class="t" style="left:97.95px;top:388.70px;width:14px;text-align:center;font-size:8px;color:#2088f4;-webkit-text-stroke:0.3px #2088f4;transform:rotate(90deg) scaleX(0.86)">094</div>
<div class="t" style="left:109.84px;top:388.70px;width:14px;text-align:center;font-size:8px;color:#2088f4;-webkit-text-stroke:0.3px #2088f4;transform:rotate(90deg) scaleX(0.86)">095</div>
<div class="t" style="left:121.73px;top:388.70px;width:14px;text-align:center;font-size:8px;color:#2088f4;-webkit-text-stroke:0.3px #2088f4;transform:rotate(90deg) scaleX(0.86)">096</div>
<div class="t" style="left:133.62px;top:388.70px;width:14px;text-align:center;font-size:8px;color:#2088f4;-webkit-text-stroke:0.3px #2088f4;transform:rotate(90deg) scaleX(0.86)">097</div>
<div class="t" style="left:145.51px;top:388.70px;width:14px;text-align:center;font-size:8px;color:#2088f4;-webkit-text-stroke:0.3px #2088f4;transform:rotate(90deg) scaleX(0.86)">098</div>
<div class="t" style="left:157.40px;top:388.70px;width:14px;text-align:center;font-size:8px;color:#2088f4;-webkit-text-stroke:0.3px #2088f4;transform:rotate(90deg) scaleX(0.86)">099</div>
<div class="t" style="left:169.29px;top:388.70px;width:14px;text-align:center;font-size:8px;color:#2088f4;-webkit-text-stroke:0.3px #2088f4;transform:rotate(90deg) scaleX(0.86)">100</div>
<div class="t" style="left:181.18px;top:388.70px;width:14px;text-align:center;font-size:8px;color:#2088f4;-webkit-text-stroke:0.3px #2088f4;transform:rotate(90deg) scaleX(0.86)">101</div>
<div class="t" style="left:193.07px;top:388.70px;width:14px;text-align:center;font-size:8px;color:#2088f4;-webkit-text-stroke:0.3px #2088f4;transform:rotate(90deg) scaleX(0.86)">102</div>
<div class="t" style="left:204.96px;top:388.70px;width:14px;text-align:center;font-size:8px;color:#2088f4;-webkit-text-stroke:0.3px #2088f4;transform:rotate(90deg) scaleX(0.86)">103</div>
<div class="t" style="left:216.85px;top:388.70px;width:14px;text-align:center;font-size:8px;color:#2088f4;-webkit-text-stroke:0.3px #2088f4;transform:rotate(90deg) scaleX(0.86)">104</div>
<div class="t" style="left:228.74px;top:388.70px;width:14px;text-align:center;font-size:8px;color:#2088f4;-webkit-text-stroke:0.3px #2088f4;transform:rotate(90deg) scaleX(0.86)">105</div>
<div class="t" style="left:240.63px;top:388.70px;width:14px;text-align:center;font-size:8px;color:#2088f4;-webkit-text-stroke:0.3px #2088f4;transform:rotate(90deg) scaleX(0.86)">106</div>
<div class="t" style="left:252.52px;top:388.70px;width:14px;text-align:center;font-size:8px;color:#2088f4;-webkit-text-stroke:0.3px #2088f4;transform:rotate(90deg) scaleX(0.86)">107</div>
<div class="t" style="left:264.41px;top:388.70px;width:14px;text-align:center;font-size:8px;color:#2088f4;-webkit-text-stroke:0.3px #2088f4;transform:rotate(90deg) scaleX(0.86)">108</div>
<div class="t" style="left:276.30px;top:388.70px;width:14px;text-align:center;font-size:8px;color:#2088f4;-webkit-text-stroke:0.3px #2088f4;transform:rotate(90deg) scaleX(0.86)">109</div>
<div class="t" style="left:288.19px;top:388.70px;width:14px;text-align:center;font-size:8px;color:#2088f4;-webkit-text-stroke:0.3px #2088f4;transform:rotate(90deg) scaleX(0.86)">110</div>
<div class="t" style="left:300.08px;top:388.70px;width:14px;text-align:center;font-size:8px;color:#2088f4;-webkit-text-stroke:0.3px #2088f4;transform:rotate(90deg) scaleX(0.86)">111</div>
<div class="t" style="left:311.97px;top:388.70px;width:14px;text-align:center;font-size:8px;color:#2088f4;-webkit-text-stroke:0.3px #2088f4;transform:rotate(90deg) scaleX(0.86)">112</div>
<div class="t" style="left:323.86px;top:388.70px;width:14px;text-align:center;font-size:8px;color:#2088f4;-webkit-text-stroke:0.3px #2088f4;transform:rotate(90deg) scaleX(0.86)">113</div>
<div class="t" style="left:335.75px;top:388.70px;width:14px;text-align:center;font-size:8px;color:#2088f4;-webkit-text-stroke:0.3px #2088f4;transform:rotate(90deg) scaleX(0.86)">114</div>
<div class="t" style="left:347.64px;top:388.70px;width:14px;text-align:center;font-size:8px;color:#2088f4;-webkit-text-stroke:0.3px #2088f4;transform:rotate(90deg) scaleX(0.86)">115</div>
<div class="t" style="left:359.53px;top:388.70px;width:14px;text-align:center;font-size:8px;color:#2088f4;-webkit-text-stroke:0.3px #2088f4;transform:rotate(90deg) scaleX(0.86)">116</div>
<div class="t" style="left:371.42px;top:388.70px;width:14px;text-align:center;font-size:8px;color:#2088f4;-webkit-text-stroke:0.3px #2088f4;transform:rotate(90deg) scaleX(0.86)">117</div>
<div class="t" style="left:383.31px;top:388.70px;width:14px;text-align:center;font-size:8px;color:#2088f4;-webkit-text-stroke:0.3px #2088f4;transform:rotate(90deg) scaleX(0.86)">118</div>
<div class="t" style="left:395.20px;top:388.70px;width:14px;text-align:center;font-size:8px;color:#2088f4;-webkit-text-stroke:0.3px #2088f4;transform:rotate(90deg) scaleX(0.86)">119</div>
<div class="t" style="left:407.09px;top:388.70px;width:14px;text-align:center;font-size:8px;color:#2088f4;-webkit-text-stroke:0.3px #2088f4;transform:rotate(90deg) scaleX(0.86)">120</div>
<div class="t" style="left:418.98px;top:388.70px;width:14px;text-align:center;font-size:8px;color:#2088f4;-webkit-text-stroke:0.3px #2088f4;transform:rotate(90deg) scaleX(0.86)">121</div>
<div class="t" style="left:430.87px;top:388.70px;width:14px;text-align:center;font-size:8px;color:#2088f4;-webkit-text-stroke:0.3px #2088f4;transform:rotate(90deg) scaleX(0.86)">122</div>
<div class="t" style="left:442.76px;top:388.70px;width:14px;text-align:center;font-size:8px;color:#2088f4;-webkit-text-stroke:0.3px #2088f4;transform:rotate(90deg) scaleX(0.86)">123</div>
<div class="t" style="left:454.65px;top:388.70px;width:14px;text-align:center;font-size:8px;color:#2088f4;-webkit-text-stroke:0.3px #2088f4;transform:rotate(90deg) scaleX(0.86)">124</div>
<div class="t" style="left:466.54px;top:388.70px;width:14px;text-align:center;font-size:8px;color:#2088f4;-webkit-text-stroke:0.3px #2088f4;transform:rotate(90deg) scaleX(0.86)">125</div>
<div class="t" style="left:478.43px;top:388.70px;width:14px;text-align:center;font-size:8px;color:#2088f4;-webkit-text-stroke:0.3px #2088f4;transform:rotate(90deg) scaleX(0.86)">126</div>
<div class="t" style="left:490.32px;top:388.70px;width:14px;text-align:center;font-size:8px;color:#2088f4;-webkit-text-stroke:0.3px #2088f4;transform:rotate(90deg) scaleX(0.86)">127</div>
<div class="t" style="left:502.21px;top:388.70px;width:14px;text-align:center;font-size:8px;color:#2088f4;-webkit-text-stroke:0.3px #2088f4;transform:rotate(90deg) scaleX(0.86)">128</div>
<div class="t" style="left:514.10px;top:388.70px;width:14px;text-align:center;font-size:8px;color:#2088f4;-webkit-text-stroke:0.3px #2088f4;transform:rotate(90deg) scaleX(0.86)">129</div>
<div class="t" style="left:525.99px;top:388.70px;width:14px;text-align:center;font-size:8px;color:#2088f4;-webkit-text-stroke:0.3px #2088f4;transform:rotate(90deg) scaleX(0.86)">130</div>
<div class="t" style="left:537.88px;top:388.70px;width:14px;text-align:center;font-size:8px;color:#2088f4;-webkit-text-stroke:0.3px #2088f4;transform:rotate(90deg) scaleX(0.86)">131</div>
<div class="t" style="left:549.77px;top:388.70px;width:14px;text-align:center;font-size:8px;color:#2088f4;-webkit-text-stroke:0.3px #2088f4;transform:rotate(90deg) scaleX(0.86)">132</div>
<div class="t" style="left:561.66px;top:388.70px;width:14px;text-align:center;font-size:8px;color:#2088f4;-webkit-text-stroke:0.3px #2088f4;transform:rotate(90deg) scaleX(0.86)">133</div>
<div class="t" style="left:573.55px;top:388.70px;width:14px;text-align:center;font-size:8px;color:#2088f4;-webkit-text-stroke:0.3px #2088f4;transform:rotate(90deg) scaleX(0.86)">134</div>
<div class="t" style="left:585.44px;top:388.70px;width:14px;text-align:center;font-size:8px;color:#2088f4;-webkit-text-stroke:0.3px #2088f4;transform:rotate(90deg) scaleX(0.86)">135</div>
<div class="t" style="left:597.33px;top:388.70px;width:14px;text-align:center;font-size:8px;color:#2088f4;-webkit-text-stroke:0.3px #2088f4;transform:rotate(90deg) scaleX(0.86)">136</div>
<div class="t" style="left:609.22px;top:388.70px;width:14px;text-align:center;font-size:8px;color:#2088f4;-webkit-text-stroke:0.3px #2088f4;transform:rotate(90deg) scaleX(0.86)">137</div>
<div class="t" style="left:621.11px;top:388.70px;width:14px;text-align:center;font-size:8px;color:#2088f4;-webkit-text-stroke:0.3px #2088f4;transform:rotate(90deg) scaleX(0.86)">138</div>
<div class="t" style="left:270.3px;top:262.2px;font-size:8px;color:#2424dc;-webkit-text-stroke:0.12px #2424dc;transform:scaleX(0.98);transform-origin:0 50%">最近50期开出号码遗漏值走势图</div>
<div class="ab" style="left:9.2px;top:259.7px;width:59.6px;height:10.3px;border:1px solid #4a4a4a;border-radius:5.2px;background:#fafafa"></div>
<svg class="ab" style="left:11.8px;top:261.2px" width="8" height="8" viewBox="0 0 8 8"><path d="M7.2 0.8 L0.8 4 L7.2 7.2z" fill="none" stroke="#2a2a2a" stroke-width="1"/></svg>
<svg class="ab" style="left:58.8px;top:261.2px" width="8" height="8" viewBox="0 0 8 8"><path d="M0.8 0.8 L7.2 4 L0.8 7.2z" fill="none" stroke="#2a2a2a" stroke-width="1"/></svg>
<div class="t" style="left:22.4px;top:261.9px;font-size:6.6px;font-weight:bold;color:#1a2050;letter-spacing:-0.05px">Page 1 of 1</div>
<svg class="ab" style="left:0;top:0" width="650" height="409" viewBox="0 0 650 409">
<path d="M168.9 69 L170.1 69 L170.6 130 L168.4 130z" fill="#f0262a"/>
<path d="M164.7 128 L174.3 128 L169.5 139z" fill="#f0262a"/>
<path d="M282.4 118.4 L283.6 117.2 L238.4 69.6 L235.6 72.4z" fill="#f0262a"/>
<path d="M231.7 65.8 L242.5 69.7 L232.7 76.5z" fill="#f0262a"/>
<path d="M558 279.2 L559.2 278 L599.8 325.6 L597 328z" fill="#f0262a"/>
<path d="M604.6 333.4 L593.8 329.5 L602.2 322.3z" fill="#f0262a"/>
<circle cx="170" cy="63.4" r="5.9" fill="#f0262a"/>
<circle cx="288" cy="122.5" r="5.9" fill="#f0262a"/>
<circle cx="552.7" cy="272.8" r="5.9" fill="#f0262a"/>
</svg>
<div class="t" style="left:165px;top:59.5px;width:10px;text-align:center;font-size:7.6px;font-weight:bold;color:#fff">1</div>
<div class="t" style="left:283px;top:118.6px;width:10px;text-align:center;font-size:7.6px;font-weight:bold;color:#fff">2</div>
<div class="t" style="left:547.7px;top:268.90000000000003px;width:10px;text-align:center;font-size:7.6px;font-weight:bold;color:#fff">3</div>
</body></html>
